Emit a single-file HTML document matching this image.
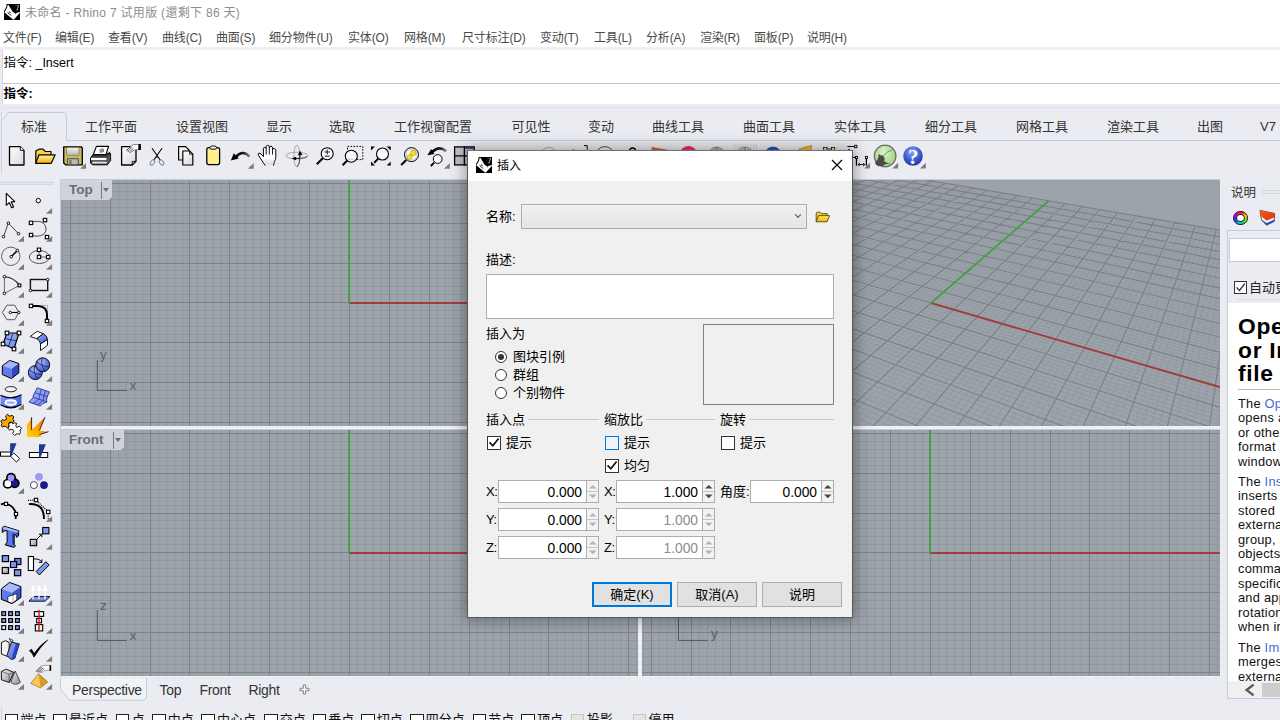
<!DOCTYPE html>
<html lang="zh-CN"><head><meta charset="utf-8"><title>未命名 - Rhino 7 试用版</title>
<style>
*{box-sizing:border-box;margin:0;padding:0}
html,body{width:1280px;height:720px;overflow:hidden}
body{position:relative;background:#ebecf1;font-family:"Liberation Sans","Noto Sans CJK SC",sans-serif;font-size:12px;color:#000;-webkit-font-smoothing:antialiased}
.abs,.abs *{position:absolute}
div,span,svg{position:absolute}
.t{white-space:nowrap;line-height:1}
/* title + menu */
#titlebar{left:0;top:0;width:1280px;height:27px;background:#fff}
#titletxt{left:25px;top:6.5px;font-size:12px;color:#8c8c8c;letter-spacing:0.3px}
#menubar{left:0;top:27px;width:1280px;height:20px;background:#fff}
#menubar .t{top:5px;font-size:12px;color:#4a4a4a;letter-spacing:-0.15px}
/* command area */
#cmd{left:2px;top:50px;width:1278px;height:54px;background:#fff;border-left:1px solid #d4d6dc}
#cmdsep{left:0;top:33px;width:1278px;height:1px;background:#bcc5d9}
#cmd .t{left:0.5px;font-size:12.5px}
/* toolbar tabs */
#tbtop{left:3px;top:107px;width:1277px;height:1px;background:#dfe2ea}
#tabline{left:66px;top:140px;width:1214px;height:1px;background:#c9d0e0}
#tab0{left:3px;top:112px;width:64px;height:29px;border:1px solid #c9d0e0;border-bottom:none;border-radius:5px 5px 0 0;background:#f0f1f5}
.tab{top:119.5px;font-size:13px;color:#333;transform:translateX(-50%)}
/* viewports */
.vp{background:#9da3ab;overflow:hidden}
.vplabel{left:0;top:0;height:20px;background:#d0d3d9;clip-path:polygon(0 0,100% 0,100% 17px,calc(100% - 3px) 100%,0 100%)}
.vplabel .t{left:8px;top:3px;font-size:13.5px;font-weight:bold;color:#6a6d73}
.vplabel i{position:absolute;top:2px;width:1px;height:17px;background:#77797e}
.vplabel b{position:absolute;top:8px;width:0;height:0;border:3.5px solid transparent;border-top:4px solid #6a6d73;border-bottom:none}
.axl{font-size:13.5px;color:#5e6065}
/* dialog */
#dlg{left:467px;top:150px;width:386px;height:468px;background:#f0f0f0;border:1px solid #55575b;border-top-color:#6f7277;box-shadow:0 0 14px 2px rgba(0,0,0,.35)}
#dlgtitle{left:0;top:0;width:384px;height:30px;background:#fff}
.lbl{font-size:13px;color:#000}
.num{background:#fff;border:1px solid #adadad;height:23px;font-size:13.8px;text-align:right;padding:5px 4px 0 0;line-height:14px}
.spin{width:11px;height:22px}
.cb{width:14px;height:13.5px;border:1px solid #333;background:#fff}
.btn{height:25px;border:1px solid #adadad;background:#e1e1e1;font-size:13px;text-align:center;line-height:23px}
.grpline{height:1px;background:#c9c9c9}
.xl{font-size:13px;letter-spacing:-0.5px}
.hp{font-size:12.8px;line-height:14.6px;white-space:pre;color:#111;letter-spacing:0.25px}
.hp i{font-style:normal;color:#3c6cd6}
.vt{top:683px;font-size:14px;letter-spacing:-0.3px;color:#333}
</style></head><body>
<div id="titlebar">
<svg style="left:4px;top:4px" width="16" height="16" viewBox="0 0 16 16"><rect width="16" height="16" fill="#000"/><path d="M0 0H2.7C2.5 2.6 1.6 4.9 0 6.9Z" fill="#fff"/><path d="M0.3 8.3L1.7 6.3C2.8 4.6 3.4 2.8 3.7 1L4.3 0.7C5.6 2.4 6.6 4.4 7.7 6.3C8.9 8.3 10.3 9.4 12 8.9L16 8.1V8.8L9.6 15.7L9 15.4Z" fill="#fff"/><path d="M3.7 8.6C4.8 9.3 6 10.4 7 11.6M4.9 7.5C5.6 7.9 6.2 8.5 6.8 9.2" stroke="#000" stroke-width="0.95" fill="none"/><path d="M10.9 9.9C11.6 9.8 12.1 9.4 12.4 8.9" stroke="#000" stroke-width="0.8" fill="none"/><path d="M14.6 1.5L12.7 6.8" stroke="#fff" stroke-width="1" stroke-dasharray="1.3 0.5"/><path d="M11.6 1.3H14.8" stroke="#fff" stroke-width="0.6" stroke-dasharray="0.8 0.5"/></svg>
<span class="t" id="titletxt">未命名 - Rhino 7 试用版 (還剩下 86 天)</span>
</div>
<div id="menubar">
<span class="t" style="left:3px">文件(F)</span><span class="t" style="left:55px">编辑(E)</span><span class="t" style="left:108px">查看(V)</span><span class="t" style="left:162px">曲线(C)</span><span class="t" style="left:216px">曲面(S)</span><span class="t" style="left:269px">细分物件(U)</span><span class="t" style="left:348px">实体(O)</span><span class="t" style="left:404px">网格(M)</span><span class="t" style="left:462px">尺寸标注(D)</span><span class="t" style="left:540px">变动(T)</span><span class="t" style="left:594px">工具(L)</span><span class="t" style="left:646px">分析(A)</span><span class="t" style="left:700px">渲染(R)</span><span class="t" style="left:754px">面板(P)</span><span class="t" style="left:807px">说明(H)</span>
</div>
<div style="left:0;top:47px;width:1280px;height:3px;background:#f0f0f0"></div>
<div id="cmd"><span class="t" style="top:7px">指令: _Insert</span><div id="cmdsep"></div><span class="t" style="top:37.5px;font-weight:bold">指令:</span></div>
<div id="tbtop"></div>
<svg style="left:0;top:108px" width="1280" height="70" viewBox="0 108 1280 70"><path d="M3 119.6L8.3 112.5H63Q66.5 112.5 66.5 116V140.5H1280" fill="none" stroke="#c3cbdd" stroke-width="1"/><path d="M1.5 112V173.6" stroke="#c9d0e0" stroke-width="1"/></svg>
<span class="t tab" style="left:34px">标准</span><span class="t tab" style="left:111px">工作平面</span><span class="t tab" style="left:202px">设置视图</span><span class="t tab" style="left:279px">显示</span><span class="t tab" style="left:342px">选取</span><span class="t tab" style="left:433px">工作视窗配置</span><span class="t tab" style="left:531px">可见性</span><span class="t tab" style="left:601px">变动</span><span class="t tab" style="left:678px">曲线工具</span><span class="t tab" style="left:769px">曲面工具</span><span class="t tab" style="left:860px">实体工具</span><span class="t tab" style="left:951px">细分工具</span><span class="t tab" style="left:1042px">网格工具</span><span class="t tab" style="left:1133px">渲染工具</span><span class="t tab" style="left:1210px">出图</span><span class="t tab" style="left:1268px">V7</span>

<svg style="left:0;top:140px" width="1280" height="40" viewBox="0 140 1280 40"><defs><linearGradient id="tp" x1="0" y1="0" x2="1" y2="1"><stop offset="0" stop-color="#ffffff"/><stop offset="1" stop-color="#d9d9d9"/></linearGradient><linearGradient id="tf" x1="0" y1="0" x2="0" y2="1"><stop offset="0" stop-color="#fdf1a6"/><stop offset="1" stop-color="#f5b400"/></linearGradient><linearGradient id="tg" x1="0" y1="0" x2="0" y2="1"><stop offset="0" stop-color="#f2f2f2"/><stop offset="1" stop-color="#b8b8b8"/></linearGradient><radialGradient id="th" cx="0.45" cy="0.3" r="0.75"><stop offset="0" stop-color="#8aa0f0"/><stop offset="0.55" stop-color="#3f5bd0"/><stop offset="1" stop-color="#1f2f9a"/></radialGradient><radialGradient id="tgh" cx="0.45" cy="0.35" r="0.7"><stop offset="0" stop-color="#d6efc0"/><stop offset="1" stop-color="#9fd27e"/></radialGradient><linearGradient id="tu" x1="0" y1="0" x2="1" y2="0"><stop offset="0" stop-color="#000"/><stop offset="0.6" stop-color="#222"/><stop offset="1" stop-color="#8a8a8a"/></linearGradient><radialGradient id="tsph" cx="0.5" cy="0.9" r="0.9"><stop offset="0" stop-color="#ffe000"/><stop offset="0.5" stop-color="#ff7a00"/><stop offset="1" stop-color="#e0107a"/></radialGradient></defs><path d="M9.5 146.6H20.3L24 150.4V165H9.5Z" fill="url(#tp)" stroke="#000" stroke-width="1.3" stroke-linejoin="round"/><path d="M20.3 146.6V150.4H24" fill="#fff" stroke="#000" stroke-width="0.9"/><path d="M35.8 163V151L39 149.2H43L45.3 151.5H51V155" fill="#f6d24a" stroke="#000" stroke-width="1.2" stroke-linejoin="round"/><path d="M39 154.8H55.2L51.2 163.3H35.6Z" fill="url(#tf)" stroke="#000" stroke-width="1.2" stroke-linejoin="round"/><path d="M63.7 146.8H81.2L82.3 148V164.8H65.6L63.7 163Z" fill="#cbb968" stroke="#000" stroke-width="1.3" stroke-linejoin="round"/><rect x="66.8" y="147.6" width="12.2" height="7.6" fill="url(#tg)" stroke="#7d7134" stroke-width="0.6"/><rect x="67.6" y="158.8" width="10.6" height="6" fill="#b9b9b9" stroke="#333" stroke-width="0.8"/><rect x="69.2" y="160.2" width="2.4" height="4" fill="#857a2e"/><path d="M80.2 168.8H86.0V163.0Z" fill="#7c7c7c"/><path d="M93.2 154.8L96.4 146.4H108.6L105.8 154.8Z" fill="#fff" stroke="#000" stroke-width="1.1" stroke-linejoin="round"/><path d="M99.5 149L102.5 148.2V152.6L99.5 153Z" fill="#9a9a9a"/><path d="M102.5 148.2L103.6 149V152L102.5 152.6Z" fill="#444"/><path d="M90.6 158L93 154.6H106L109.6 152.4L110.6 154V160.5L107.4 164.8H92.4L90.6 163Z" fill="#3a3a3a" stroke="#000" stroke-width="1" stroke-linejoin="round"/><path d="M91 157.8H106.6V160.2H91Z" fill="#fff"/><path d="M92.2 161.6H106.8V163.6H92.2Z" fill="#e0e0e0"/><path d="M106.6 157.8L110.4 154.2V160.4L107.2 164.6Z" fill="#555"/><path d="M121.6 146.6H136V161.4L132.2 165H121.6Z" fill="url(#tp)" stroke="#000" stroke-width="1.3" stroke-linejoin="round"/><path d="M136 161.4H132.2V165" fill="none" stroke="#000" stroke-width="0.9"/><path d="M126.4 150.2L133.2 144.6L138.6 144.4V149.6L134.4 150L130.2 152.6Z" fill="#fff" stroke="#555" stroke-width="0.7"/><path d="M126.8 150L131 146.4M128.2 150.8L132.2 147.2M129.6 151.8L133.6 148.2" stroke="#444" stroke-width="0.8"/><rect x="138.6" y="144" width="2.3" height="6" fill="#000"/><path d="M152 148.2L160.2 160M162 148.2L153.8 160" stroke="#000" stroke-width="1.1" fill="none"/><ellipse cx="152.4" cy="162.6" rx="1.9" ry="3" transform="rotate(35 152.4 162.6)" fill="none" stroke="#666e8e" stroke-width="0.9"/><ellipse cx="161.6" cy="162.6" rx="1.9" ry="3" transform="rotate(-35 161.6 162.6)" fill="none" stroke="#666e8e" stroke-width="0.9"/><circle cx="157" cy="157" r="0.9" fill="#223"/><path d="M178.6 146.6H185.6L189 150V160H178.6Z" fill="url(#tp)" stroke="#000" stroke-width="1.2" stroke-linejoin="round"/><path d="M182.8 151H189.6L192.8 154.2V165H182.8Z" fill="url(#tp)" stroke="#000" stroke-width="1.2" stroke-linejoin="round"/><path d="M189.6 151V154.2H192.8" fill="none" stroke="#000" stroke-width="0.8"/><rect x="206.8" y="147.6" width="12.8" height="17" rx="2" fill="#fdf08c" stroke="#000" stroke-width="1.3"/><path d="M209.8 147.8Q210 146 211.6 146H214.8Q216.4 146 216.6 147.8L215.6 149.2H210.8Z" fill="#e6e6e6" stroke="#000" stroke-width="0.9"/><path d="M230.8 160.6L233.8 153.2L238.8 158.6Z" fill="#000"/><path d="M235.8 157.2Q242.5 149.3 249.6 156.6" fill="none" stroke="url(#tu)" stroke-width="2.5"/><path d="M247.9 168.8H253.7V163.0Z" fill="#7c7c7c"/><path d="M265.2 165.6L258.4 155.2Q257.6 153.6 258.8 153.2Q260 152.9 261 154L263.4 156.6V148.6Q263.5 147.3 264.8 147.3Q266.1 147.3 266.2 148.6V146.6Q266.4 145.3 267.7 145.3Q269.1 145.3 269.3 146.6V147.4Q269.5 146.2 270.9 146.2Q272.3 146.3 272.5 147.6V149.6Q272.8 148.5 274.2 148.6Q275.6 148.8 275.8 150.2V157.4Q275.6 159.6 274.4 161.6L273.5 165.6" fill="#fff" stroke="#000" stroke-width="1" stroke-linejoin="round"/><path d="M266.2 148.6V154.6M269.3 147V154.6M272.5 149V154.6" stroke="#000" stroke-width="0.9"/><path d="M264 158.5L274.8 158.5L273 165.2H265.6L262.8 161Z" fill="url(#tg)" opacity="0.55"/><ellipse cx="296.9" cy="155.6" rx="10.9" ry="3.4" fill="none" stroke="#8a8a8a" stroke-width="0.7"/><ellipse cx="296.9" cy="156" rx="3" ry="10.7" fill="none" stroke="#8a8a8a" stroke-width="0.7"/><path d="M299.8 154.5V158.4H295.6" stroke="#000" stroke-width="0.9" fill="none"/><path d="M297.9 155.3L299.9 150.5L302.4 154.9Z" fill="#000"/><path d="M291.5 158.4L296.1 156.7V160.3Z" fill="#000"/><path d="M299.8 158.4Q304.5 158 307.2 156.6M297 166.6Q299.6 164 299.8 158.4" stroke="#333" stroke-width="0.8" fill="none"/><circle cx="327.2" cy="153.7" r="6" fill="#fafafa" stroke="#000" stroke-width="1.1"/><path d="M322.8 158.2L316.8 164.2" stroke="#000" stroke-width="2"/><path d="M324.6 152H329.8M327.2 149.6V154.4M324.8 156.2H329.6" stroke="#000" stroke-width="0.9"/><rect x="347.5" y="146.4" width="15.3" height="13.2" fill="none" stroke="#000" stroke-width="1" stroke-dasharray="1.6 1.4"/><circle cx="351.3" cy="156.2" r="6" fill="#f6f6f6" stroke="#000" stroke-width="1.1"/><path d="M348.6 159.4H354.2" stroke="#888" stroke-width="0.8" stroke-dasharray="1.4 1.2"/><path d="M347 160.8L342.6 165.2" stroke="#000" stroke-width="2"/><circle cx="382.5" cy="154" r="6" fill="#fafafa" stroke="#000" stroke-width="1.1"/><path d="M378.2 158.6L374.2 162.8" stroke="#000" stroke-width="2"/><path d="M371 146.4H375L371 150.4ZM390.7 146.4V150.4L386.7 146.4ZM371 165.5V161.5L375 165.5ZM390.7 165.5H386.7L390.7 161.5Z" fill="#000"/><circle cx="411.5" cy="154.6" r="7" fill="#fafafa" stroke="#000" stroke-width="1"/><circle cx="411.5" cy="154.6" r="5.6" fill="none" stroke="#999" stroke-width="0.6"/><circle cx="413.2" cy="152.9" r="2.8" fill="#f4e020" stroke="#8a7a00" stroke-width="0.4"/><circle cx="409.6" cy="157" r="2.5" fill="#f4e020" stroke="#8a7a00" stroke-width="0.4"/><path d="M406.2 160L401.2 165" stroke="#000" stroke-width="2"/><path d="M427.4 155.2L431.2 149L434.4 154Z" fill="#000"/><path d="M432.4 151.8Q439 145.3 446.2 151.2" fill="none" stroke="url(#tu)" stroke-width="2.8"/><circle cx="437.7" cy="159" r="4.4" fill="#fafafa" stroke="#000" stroke-width="1"/><path d="M434.2 162.6L430.8 166" stroke="#000" stroke-width="1.8"/><path d="M444.0 168.8H449.8V163.0Z" fill="#7c7c7c"/><rect x="454.6" y="146.9" width="19.6" height="18" fill="#c2c2c2" stroke="#000" stroke-width="1.3"/><path d="M464.4 146.4V165.4M454 155.9H474.6" stroke="#000" stroke-width="1.4"/><rect x="465.2" y="147.5" width="8.4" height="1.3" fill="#1a2a9a"/><circle cx="549" cy="156" r="8.6" fill="none" stroke="#999" stroke-width="0.8"/><circle cx="573.5" cy="150.3" r="1.4" fill="#e08000"/><path d="M584 145.6H587.2V149.6" fill="none" stroke="#000" stroke-width="1"/><circle cx="604.8" cy="155.6" r="9" fill="none" stroke="#333" stroke-width="0.9"/><path d="M629.6 151Q629.6 148 632.6 148Q635.6 148 635.6 151" fill="none" stroke="#000" stroke-width="1.4"/><path d="M652 147.4L670 150.6V152H652Z" fill="#f0601a" stroke="#7a2a00" stroke-width="0.4"/><circle cx="688.5" cy="154.6" r="8.6" fill="url(#tsph)"/><circle cx="716.7" cy="155.4" r="8.4" fill="#b8b8b8" stroke="#666" stroke-width="0.6"/><path d="M716.7 147V152" stroke="#555" stroke-width="0.6"/><path d="M734 145H757M734 147H757M734 149H757" stroke="#c4c6cc" stroke-width="1.2" stroke-dasharray="1.5 1.2"/><circle cx="745" cy="155.4" r="8.4" fill="#bdbdbd" stroke="#777" stroke-width="0.6"/><path d="M745 147V152" stroke="#555" stroke-width="0.6"/><circle cx="773" cy="155.4" r="8.4" fill="#1f4fd0" stroke="#0a1a6a" stroke-width="0.5"/><path d="M799 149L811.6 145.4L811 151H800Z" fill="#f5b820" stroke="#8a5a00" stroke-width="0.5"/><rect x="823.6" y="147.6" width="3.4" height="3" fill="#f4d860" stroke="#000" stroke-width="0.7"/><rect x="831.4" y="147.6" width="3.4" height="3" fill="#f4d860" stroke="#000" stroke-width="0.7"/><path d="M827 149H831.4" stroke="#000" stroke-width="0.8"/><path d="M847.4 146.5H854.4M852.8 157.4H855.5" stroke="#000" stroke-width="1"/><rect x="854.6" y="145.3" width="2.3" height="2.4" fill="#fff" stroke="#000" stroke-width="0.9"/><path d="M847.6 150.2L849 148.8L850.4 150.2L849 151.2Z" fill="#000"/><rect x="855.5" y="156.4" width="2" height="2" fill="#fff" stroke="#000" stroke-width="0.9"/><rect x="865.4" y="156.4" width="2" height="2" fill="#fff" stroke="#000" stroke-width="0.9"/><path d="M856.5 158.6V165.8M866.4 158.6V165.8" stroke="#000" stroke-width="1.3"/><path d="M858.4 164.6H864.6M859.8 163.2L858.2 164.6L859.8 166M863.2 163.2L864.8 164.6L863.2 166" fill="none" stroke="#000" stroke-width="0.9"/><path d="M864.2 168.5H870.0V162.7Z" fill="#7c7c7c"/><circle cx="885.1" cy="156" r="10.8" fill="url(#tgh)" stroke="#6e6e6e" stroke-width="1.3"/><path d="M875.1 162.7L877.4 159.5L878.6 156.8L878.2 154.8L879.8 154.5L880.5 155.6L882.1 155.2L883.7 156.4L884.8 158.8L884 161.1L886.8 162.7L890.7 163.4L886 163.9L882.9 165.8L878.2 166.3L875.5 164.2Z" fill="#4a4a4a"/><path d="M883.4 155.6Q887.5 151 892.4 149.8" stroke="#5f6a58" stroke-width="0.7" fill="none"/><path d="M883 146.5V153.5" stroke="#e4f4d8" stroke-width="1"/><path d="M892.3 168.5H898.1V162.7Z" fill="#7c7c7c"/><circle cx="913" cy="156" r="9.8" fill="url(#th)"/><text x="913.2" y="163.6" text-anchor="middle" style="font-family:'Liberation Serif',serif;font-weight:bold;font-size:21px" fill="#fff">?</text><path d="M920.0 168.5H925.8V162.7Z" fill="#7c7c7c"/></svg>
<svg style="left:0;top:180px" width="62" height="520" viewBox="0 180 62 520"><defs><linearGradient id="gb" x1="0" y1="0" x2="1" y2="1"><stop offset="0" stop-color="#9db0fa"/><stop offset="1" stop-color="#3d58d6"/></linearGradient><radialGradient id="gs" cx="0.4" cy="0.3" r="0.8"><stop offset="0" stop-color="#a9b9fb"/><stop offset="0.6" stop-color="#5672e6"/><stop offset="1" stop-color="#2740b0"/></radialGradient><linearGradient id="gg" x1="0" y1="0" x2="1" y2="1"><stop offset="0" stop-color="#f2f2f2"/><stop offset="1" stop-color="#8c8c8c"/></linearGradient><linearGradient id="go" x1="0" y1="1" x2="1" y2="0"><stop offset="0" stop-color="#ffd400"/><stop offset="0.55" stop-color="#ff9a00"/><stop offset="1" stop-color="#e84a00"/></linearGradient><linearGradient id="gl" x1="0" y1="0" x2="1" y2="1"><stop offset="0" stop-color="#a4b4fa"/><stop offset="1" stop-color="#6f88f0"/></linearGradient><linearGradient id="gb2" x1="0" y1="0" x2="1" y2="0.3"><stop offset="0" stop-color="#7d95f4"/><stop offset="1" stop-color="#4862dc"/></linearGradient></defs><path d="M0 182.2H54M0 184.3H54" stroke="#c9d0e0" stroke-width="0.9"/><path d="M6.3 193.3V205.3L9.2 202.6L11.7 207.8L13.6 206.9L11.2 201.9L14.8 201.6Z" fill="#fff" stroke="#000" stroke-width="1.1" stroke-linejoin="round"/><circle cx="38.3" cy="200.6" r="2.2" fill="#fff" stroke="#000" stroke-width="1.0"/><path d="M45.9 213.8H52.1V207.9Z" fill="#7c7c7c"/><path d="M3.5 236.6L8.4 223.1L18.5 233.7" fill="none" stroke="#333" stroke-width="0.9"/><circle cx="3.5" cy="236.6" r="1.3" fill="#fff" stroke="#000" stroke-width="0.9"/><circle cx="8.4" cy="223.1" r="1.3" fill="#fff" stroke="#000" stroke-width="0.9"/><circle cx="18.5" cy="233.7" r="1.3" fill="#fff" stroke="#000" stroke-width="0.9"/><path d="M17.8 241.8H24.0V235.9Z" fill="#7c7c7c"/><path d="M31 222.9C37 219.5 46 221.5 46 229C46 236 37 237.5 31 235" fill="none" stroke="#333" stroke-width="0.9"/><rect x="29.3" y="221.2" width="3.4" height="3.4" fill="#fff" stroke="#000" stroke-width="1.1"/><rect x="43.3" y="218.4" width="3.4" height="3.4" fill="#fff" stroke="#000" stroke-width="1.1"/><rect x="29.3" y="233.3" width="3.4" height="3.4" fill="#fff" stroke="#000" stroke-width="1.1"/><rect x="45.3" y="235.4" width="3.4" height="3.4" fill="#fff" stroke="#000" stroke-width="1.1"/><path d="M45.9 241.8H52.1V235.9Z" fill="#7c7c7c"/><circle cx="10.8" cy="256.3" r="9.2" fill="none" stroke="#555" stroke-width="0.9"/><path d="M11.2 256.7L17.4 250.5" stroke="#000" stroke-width="1.5"/><circle cx="11.2" cy="256.7" r="1.3" fill="#fff" stroke="#000" stroke-width="0.9"/><circle cx="17.4" cy="250.5" r="1.3" fill="#fff" stroke="#000" stroke-width="0.9"/><path d="M17.8 269.8H24.0V263.9Z" fill="#7c7c7c"/><ellipse cx="39.4" cy="257" rx="10.1" ry="6.5" fill="none" stroke="#444" stroke-width="0.9"/><path d="M39 249.8V257H48.2" fill="none" stroke="#444" stroke-width="0.8"/><rect x="37.3" y="248.1" width="3.4" height="3.4" fill="#fff" stroke="#000" stroke-width="1.1"/><rect x="37.3" y="255.3" width="3.4" height="3.4" fill="#fff" stroke="#000" stroke-width="1.1"/><rect x="46.5" y="255.3" width="3.4" height="3.4" fill="#fff" stroke="#000" stroke-width="1.1"/><path d="M45.9 269.8H52.1V263.9Z" fill="#7c7c7c"/><path d="M4.4 276.7Q14.5 277.5 19.4 285.4" fill="none" stroke="#222" stroke-width="1.1"/><path d="M4.4 276.7V293.4L19.4 285.4" fill="none" stroke="#333" stroke-width="0.7"/><circle cx="4.4" cy="276.7" r="1.3" fill="#fff" stroke="#000" stroke-width="0.9"/><circle cx="4.4" cy="293.4" r="1.3" fill="#fff" stroke="#000" stroke-width="0.9"/><rect x="18.0" y="284.0" width="2.8" height="2.8" fill="#fff" stroke="#000" stroke-width="1.1"/><path d="M17.8 297.8H24.0V291.9Z" fill="#7c7c7c"/><rect x="30.4" y="279.5" width="17.3" height="11" fill="none" stroke="#111" stroke-width="1.4"/><circle cx="47.7" cy="279.6" r="1.3" fill="#fff" stroke="#000" stroke-width="0.9"/><circle cx="30.5" cy="290.5" r="1.3" fill="#fff" stroke="#000" stroke-width="0.9"/><path d="M45.9 297.8H52.1V291.9Z" fill="#7c7c7c"/><path d="M2.3 312.5L6.9 305.2H14.7L18.8 312.5L14.7 319.7H6.9Z" fill="none" stroke="#333" stroke-width="0.8"/><path d="M10.3 312.5H18.8" stroke="#000" stroke-width="1.1"/><circle cx="10.3" cy="312.5" r="1.2" fill="#fff" stroke="#000" stroke-width="0.9"/><circle cx="18.8" cy="312.5" r="1.2" fill="#fff" stroke="#000" stroke-width="0.9"/><path d="M17.8 325.8H24.0V319.9Z" fill="#7c7c7c"/><path d="M40 305.4H47.4V313" fill="none" stroke="#999" stroke-width="0.7"/><path d="M31 305.9H38.5Q47 306.5 47 315V321" fill="none" stroke="#000" stroke-width="2"/><rect x="29.3" y="304.2" width="3.4" height="3.4" fill="#fff" stroke="#000" stroke-width="1.1"/><rect x="45.3" y="319.3" width="3.4" height="3.4" fill="#fff" stroke="#000" stroke-width="1.1"/><path d="M45.9 325.8H52.1V319.9Z" fill="#7c7c7c"/><path d="M7 333H19L14 349L3 344Z" fill="url(#gl)" stroke="#000" stroke-width="1.2"/><path d="M13 333L8.5 346.5M5 338.5L16.5 341" stroke="#1a2560" stroke-width="0.9" fill="none"/><rect x="5.2" y="331.2" width="3.6" height="3.6" fill="#fff" stroke="#000" stroke-width="1.1"/><rect x="17.2" y="331.2" width="3.6" height="3.6" fill="#fff" stroke="#000" stroke-width="1.1"/><rect x="12.2" y="347.2" width="3.6" height="3.6" fill="#fff" stroke="#000" stroke-width="1.1"/><rect x="1.2" y="342.2" width="3.6" height="3.6" fill="#fff" stroke="#000" stroke-width="1.1"/><path d="M17.8 353.8H24.0V347.9Z" fill="#7c7c7c"/><path d="M30.2 336.5L37.2 331.3L43.3 333.7L36.8 338.7Z" fill="#fff" stroke="#000" stroke-width="0.9" stroke-linejoin="round"/><path d="M36.8 338.7L43.3 333.7Q47.2 335.6 47.5 339.6L40.5 343.9Q40.2 340.4 36.8 338.7Z" fill="url(#gb)" stroke="#000" stroke-width="0.9" stroke-linejoin="round"/><path d="M40.5 343.9L47.5 339.6V345.3L40.5 350.5Z" fill="#fff" stroke="#000" stroke-width="0.9" stroke-linejoin="round"/><path d="M45.9 353.8H52.1V347.9Z" fill="#7c7c7c"/><path d="M2.3 365.8L9.6 360.4L18.8 363.5L11.5 368.8Z" fill="#a3b4fb"/><path d="M2.3 365.8L11.5 368.8V378.6L2.3 374.5Z" fill="#5d79ec"/><path d="M11.5 368.8L18.8 363.5V372.9L11.5 378.6Z" fill="#2f48c2"/><path d="M2.3 365.8L9.6 360.4L18.8 363.5V372.9L11.5 378.6L2.3 374.5Z" fill="none" stroke="#000" stroke-width="1"/><path d="M17.8 381.8H24.0V375.9Z" fill="#7c7c7c"/><circle cx="35.3" cy="372.6" r="7" fill="url(#gs)" stroke="#000" stroke-width="0.9"/><path d="M29.1 369.6Q35.8 375.1 41.9 374.4M34.8 365.6Q32.8 372.6 37.7 379.1" fill="none" stroke="#111" stroke-width="0.7"/><circle cx="42.7" cy="364.8" r="7" fill="url(#gs)" stroke="#000" stroke-width="0.9"/><path d="M36.5 361.8Q43.2 367.3 49.3 366.6M42.2 357.8Q40.2 364.8 45.1 371.3" fill="none" stroke="#111" stroke-width="0.7"/><path d="M45.9 381.8H52.1V375.9Z" fill="#7c7c7c"/><ellipse cx="10.8" cy="389.2" rx="5.7" ry="2.6" fill="#f4f5f8" stroke="#111" stroke-width="0.9"/><path d="M0.5 395.2Q10.8 400.5 21.5 394.8V404.6Q10.8 411 0.5 404.8Z" fill="url(#gb2)"/><path d="M0.5 395.2Q10.8 400.5 21.5 394.8M0.5 404.8Q10.8 411 21.5 404.6" fill="none" stroke="#000" stroke-width="1.2"/><ellipse cx="10.8" cy="402.6" rx="5.4" ry="2.5" fill="#a6b5f9" stroke="#fff" stroke-width="1.6"/><path d="M17.8 409.8H24.0V403.9Z" fill="#7c7c7c"/><path d="M37.2 387.8L49.5 391.9Q45.5 399 47 402Q42 403 40.4 406.1L28.9 402Q34 398 33.8 394.5Q35.8 391 37.2 387.8Z" fill="url(#gl)" stroke="#16226e" stroke-width="0.8"/><path d="M41.3 389.2Q39.5 395.5 39 398.5Q37 402 32.8 403.4M45.4 390.6Q43.5 397 43 400Q41 403.5 36.6 404.8M35 392.8L47.3 396.6M33.5 397.4L45.6 401.5" fill="none" stroke="#1b2a80" stroke-width="0.7"/><path d="M45.9 409.8H52.1V403.9Z" fill="#7c7c7c"/><path d="M5.40 416.25L7.50 414.20L9.20 416.25L12.10 415.40L13.75 416.70L12.90 419.20L14.20 421.25L12.50 422.50L9.60 422.10L8.75 423.75L9.00 426.70L7.50 427.90L5.80 426.70L4.20 426.25L2.10 427.10L1.25 425.40L2.10 423.30L0.80 421.25L2.10 419.60L4.20 420.40L6.25 419.60L6.25 417.50Z" fill="#f8a900" stroke="#000" stroke-width="0.9" stroke-linejoin="round"/><path d="M9.60 422.90L11.70 422.50L12.50 423.75L14.60 422.90L16.70 423.30L15.80 425.80L16.70 427.50L19.20 426.25L21.70 428.30L20.00 430.00L20.40 432.50L19.60 434.20L17.10 433.75L14.60 435.40L12.50 433.30L13.75 431.70L12.90 429.60L10.40 429.20L9.60 430.40L8.30 428.30L9.20 426.25L8.75 424.20Z" fill="#fff" stroke="#000" stroke-width="0.9" stroke-linejoin="round"/><path d="M27 436.9V425.4L31.6 417.2V430L45 417.2L39.4 430.5L48.6 431.7L39.4 434.6L41.7 436.9Z" fill="url(#go)"/><path d="M31.6 417.2V430M45 417.2L39.4 430.5M48.6 431.7L39.4 434.6" stroke="#000" stroke-width="0.8" fill="none"/><path d="M13.8 453L19.7 458.5L16.5 462.1L10.5 456.2Z" fill="#fff" stroke="#000" stroke-width="0.9"/><rect x="0.5" y="452" width="10" height="4.2" fill="#fff" stroke="#000" stroke-width="1"/><path d="M10.1 443.3H16.5L11.5 455.7H10.1Z" fill="#1f3893"/><rect x="29.4" y="452.5" width="18.3" height="5" fill="#fff" stroke="#000" stroke-width="1"/><path d="M39 444.2H45.9L40.4 457.5H39Z" fill="#1f3893"/><path d="M11 477.8m0 0" /><circle cx="11.0" cy="477.8" r="5" fill="#000"/><circle cx="7.8" cy="483.7" r="5" fill="#000"/><circle cx="14.7" cy="483.3" r="5" fill="#000"/><circle cx="7.8" cy="483.7" r="3.4" fill="#fff"/><circle cx="14.7" cy="483.3" r="3.4" fill="#1a1a8c"/><circle cx="11.0" cy="477.8" r="3.4" fill="#9b9bf6"/><path d="M17.8 493.8H24.0V487.9Z" fill="#7c7c7c"/><circle cx="39" cy="476.8" r="3.9" fill="#9b9bf6"/><circle cx="33.9" cy="485.1" r="3.5" fill="#fff" stroke="#222" stroke-width="0.8"/><circle cx="44" cy="485.1" r="3.9" fill="#1a1a8c"/><path d="M0.9 504.3Q3.5 503.4 6 503.9Q14 505.5 16 514L15.6 519" fill="none" stroke="#000" stroke-width="1.8"/><rect x="4.4" y="502.3" width="3.2" height="3.2" fill="#fff" stroke="#000" stroke-width="1.1"/><rect x="14.4" y="512.4" width="3.2" height="3.2" fill="#fff" stroke="#000" stroke-width="1.1"/><path d="M28 500.4L36 500L48.2 511.9V520" fill="none" stroke="#000" stroke-width="1.2" stroke-dasharray="1.1 1.1"/><path d="M28.9 504.1Q44 503 44 519" fill="none" stroke="#000" stroke-width="1.9"/><rect x="34.3" y="498.3" width="3.4" height="3.4" fill="#fff" stroke="#000" stroke-width="1.1"/><rect x="46.5" y="510.2" width="3.4" height="3.4" fill="#fff" stroke="#000" stroke-width="1.1"/><path d="M45.9 521.8H52.1V515.9Z" fill="#7c7c7c"/><path d="M2.3 527.8L4.2 526.2L18.75 530.75L18.5 535.75L16.5 537.4Q16.3 534.4 14.2 533.8L14.2 544.7L15.6 545.75L13.75 547.4L5.2 544.9L5.4 544L7.1 542.8V530.5Q4.6 530.4 2.3 532.4Z" fill="#5b79ee" stroke="#000" stroke-width="1" stroke-linejoin="round"/><path d="M2.9 528L4.4 526.8L18.2 531.1L18.1 532.6L3 528.9Z" fill="#aebcfb"/><path d="M12.4 533.4L13.9 533.9V544.9L12.6 544.6Z" fill="#15246e"/><path d="M16.4 532.6L18.1 533.1L18 535.6L16.7 536.7Z" fill="#2338a8"/><rect x="30.3" y="539.4" width="6.4" height="6.3" fill="url(#gg)" stroke="#000" stroke-width="1.1"/><rect x="42.7" y="527.5" width="6.2" height="6.3" fill="#7d96f3" stroke="#000" stroke-width="1.1"/><path d="M36.5 539.5L41.5 534.6M39 534.2H41.9V537.2" fill="none" stroke="#000" stroke-width="1"/><path d="M45.9 549.8H52.1V543.9Z" fill="#7c7c7c"/><rect x="2.3" y="555.6" width="6.2" height="6" fill="#7d96f3" stroke="#000" stroke-width="1.2"/><rect x="14.7" y="558.5" width="6.2" height="6" fill="#6d88f0" stroke="#000" stroke-width="1.2"/><rect x="10.5" y="561.5" width="6.2" height="6" fill="#7d96f3" stroke="#000" stroke-width="1.2"/><rect x="2.3" y="567.5" width="6.2" height="6" fill="url(#gg)" stroke="#000" stroke-width="1.2"/><rect x="14.5" y="569.7" width="6.2" height="6" fill="#7d96f3" stroke="#000" stroke-width="1.2"/><rect x="28.3" y="556.5" width="5.2" height="14" fill="#fff" stroke="#000" stroke-width="1.1"/><path d="M33.5 559Q40 558.5 41.6 562M38.8 562.2L41.8 562.6L42 559.4" fill="none" stroke="#000" stroke-width="1"/><path d="M36.2 571.4L45.9 561.7L49.1 565L39.4 574.9Z" fill="#7d96f3" stroke="#000" stroke-width="1"/><path d="M1.4 588.8L9.6 582.4L20.9 586.6L12 592.8Z" fill="#a9b9fb"/><path d="M1.4 588.8L12 592.8V603.5L1.4 599.4Z" fill="#5d79ec"/><path d="M12 592.8L20.9 586.6V597.6L12 603.5Z" fill="#3a55d0"/><path d="M7.8 596.5L13 595L16.8 593.5V600.2L12 603.5L7.8 601.8Z" fill="#fff" stroke="#000" stroke-width="0.7"/><path d="M13 595V602.8" stroke="#888" stroke-width="0.7"/><path d="M1.4 588.8L9.6 582.4L20.9 586.6V597.6L12 603.5L1.4 599.4Z" fill="none" stroke="#000" stroke-width="1"/><path d="M17.8 605.8H24.0V599.9Z" fill="#7c7c7c"/><path d="M28.9 601.2L33.5 596.6H50L45 601.2Z" fill="#7d96f3" stroke="#000" stroke-width="0.9"/><path d="M33.0 599V589M31.4 590.2L33.0 586.4L34.6 590.2Z" stroke="#fff" stroke-width="1.3" fill="#fff"/><path d="M39.0 599V589M37.4 590.2L39.0 586.4L40.6 590.2Z" stroke="#fff" stroke-width="1.3" fill="#fff"/><path d="M45.0 599V589M43.4 590.2L45.0 586.4L46.6 590.2Z" stroke="#fff" stroke-width="1.3" fill="#fff"/><path d="M45.9 605.8H52.1V599.9Z" fill="#7c7c7c"/><rect x="1.8" y="611.7" width="3.8" height="3.8" fill="#7d96f3" stroke="#000" stroke-width="1.2"/><rect x="1.8" y="618.6" width="3.8" height="3.8" fill="#7d96f3" stroke="#000" stroke-width="1.2"/><rect x="1.8" y="625.7" width="3.8" height="3.8" fill="#fff" stroke="#000" stroke-width="1.2"/><rect x="8.7" y="611.7" width="3.8" height="3.8" fill="#7d96f3" stroke="#000" stroke-width="1.2"/><rect x="8.7" y="618.6" width="3.8" height="3.8" fill="#7d96f3" stroke="#000" stroke-width="1.2"/><rect x="8.7" y="625.7" width="3.8" height="3.8" fill="#7d96f3" stroke="#000" stroke-width="1.2"/><rect x="15.5" y="611.7" width="3.8" height="3.8" fill="#7d96f3" stroke="#000" stroke-width="1.2"/><rect x="15.5" y="618.6" width="3.8" height="3.8" fill="#7d96f3" stroke="#000" stroke-width="1.2"/><rect x="15.5" y="625.7" width="3.8" height="3.8" fill="#7d96f3" stroke="#000" stroke-width="1.2"/><path d="M17.8 633.8H24.0V627.9Z" fill="#7c7c7c"/><rect x="34.4" y="611.6" width="9.2" height="4.8" fill="#f4f4f4" stroke="#000" stroke-width="1.1"/><rect x="36.7" y="618.4" width="4.8" height="4.4" fill="#f4f4f4" stroke="#000" stroke-width="1.1"/><rect x="35.3" y="624.6" width="7.4" height="6.3" fill="#f4f4f4" stroke="#000" stroke-width="1.1"/><path d="M39 610V631.8" stroke="#d01818" stroke-width="1.4"/><path d="M45.9 633.8H52.1V627.9Z" fill="#7c7c7c"/><path d="M9.2 638.5L13.3 640.6L11 642Z" fill="#fff" stroke="#000" stroke-width="0.7"/><path d="M1.4 642.5L5.5 640.7L9.2 642.5V657L5 655.5L1.4 654Z" fill="#f3f3f3" stroke="#000" stroke-width="0.9"/><path d="M6.9 655.4L11.5 642.1L19.3 643.9L14.7 658.6L11 659.5Z" fill="url(#gb)" stroke="#000" stroke-width="0.9"/><path d="M16 643.2L19.3 643.9L14.7 658.6L11.6 659.3Z" fill="#2b44b8"/><path d="M17.8 661.8H24.0V655.9Z" fill="#7c7c7c"/><path d="M29.4 650.6L31.6 649.2Q33 651 34 653.6Q39.5 645.5 47.7 639.8Q39 648.5 34 657.2Q32.5 653.5 29.4 650.6Z" fill="#000" stroke="#000" stroke-width="0.6"/><path d="M45.9 661.8H52.1V655.9Z" fill="#7c7c7c"/><path d="M1.4 671.4L6.4 669.2L13.8 672.4L9.2 682.5L1.4 679.7Z" fill="url(#gg)" stroke="#000" stroke-width="0.9"/><path d="M1.4 671.4L9 674.4L13.8 672.4M9 674.4L9.2 682.5" fill="none" stroke="#333" stroke-width="0.6"/><path d="M15.1 671L10.8 682.3Q15.6 686.3 20.4 682.3Z" fill="url(#gg)" stroke="#111" stroke-width="0.7"/><path d="M17.8 689.8H24.0V683.9Z" fill="#7c7c7c"/><path d="M38.5 673.7L30.7 683.4L40.4 687.8Z" fill="#fcc85e"/><path d="M38.5 673.7L40.4 687.8L47.7 682Z" fill="#e39a1e"/><path d="M38.5 673.7L30.7 683.4L40.4 687.8L47.7 682Z" fill="none" stroke="#7a5200" stroke-width="0.6"/><path d="M36.2 671.4L41 666.2L43.5 665.4H49.8V670.2H45L42.5 672.4Z" fill="#fff" stroke="#666" stroke-width="0.6"/><path d="M36.4 671.2L40.8 666.6M37.6 671.8L42 667M38.9 672.2L43.2 667.6M40.3 672.4L44.2 668.4" stroke="#444" stroke-width="0.75"/><rect x="49.6" y="665.2" width="1.6" height="5.6" fill="#000"/><path d="M45.9 689.8H52.1V683.9Z" fill="#7c7c7c"/></svg>
<div style="left:60px;top:179px;width:1160px;height:498px;background:#eef0f6;border-left:1px solid #c3cbdd;border-top:1px solid #c3cbdd"></div>
<div class="vp" style="left:61px;top:180px;width:577px;height:246px"><svg width="577" height="246" viewBox="0 0 577 246" style="left:0;top:0"><path d="M1.50 0V246M17.50 0V246M25.50 0V246M33.50 0V246M41.50 0V246M57.50 0V246M65.50 0V246M73.50 0V246M81.50 0V246M97.50 0V246M105.50 0V246M113.50 0V246M121.50 0V246M136.50 0V246M144.50 0V246M152.50 0V246M160.50 0V246M176.50 0V246M184.50 0V246M192.50 0V246M200.50 0V246M216.50 0V246M224.50 0V246M232.50 0V246M240.50 0V246M256.50 0V246M264.50 0V246M272.50 0V246M280.50 0V246M296.50 0V246M304.50 0V246M312.50 0V246M320.50 0V246M336.50 0V246M344.50 0V246M352.50 0V246M360.50 0V246M376.50 0V246M384.50 0V246M392.50 0V246M400.50 0V246M416.50 0V246M424.50 0V246M432.50 0V246M440.50 0V246M455.50 0V246M463.50 0V246M471.50 0V246M479.50 0V246M495.50 0V246M503.50 0V246M511.50 0V246M519.50 0V246M535.50 0V246M543.50 0V246M551.50 0V246M559.50 0V246M575.50 0V246M0 11.50H577M0 19.50H577M0 27.50H577M0 35.50H577M0 51.50H577M0 59.50H577M0 67.50H577M0 75.50H577M0 90.50H577M0 98.50H577M0 106.50H577M0 114.50H577M0 130.50H577M0 138.50H577M0 146.50H577M0 154.50H577M0 170.50H577M0 178.50H577M0 186.50H577M0 194.50H577M0 210.50H577M0 218.50H577M0 226.50H577M0 234.50H577" stroke="#90969e" stroke-width="1" fill="none"/><path d="M9.50 0V246M49.50 0V246M89.50 0V246M128.50 0V246M168.50 0V246M208.50 0V246M248.50 0V246M288.50 122.90V246M328.50 0V246M368.50 0V246M408.50 0V246M448.50 0V246M487.50 0V246M527.50 0V246M567.50 0V246M0 3.50H577M0 43.50H577M0 83.50H577M0 122.50H288.50M0 162.50H577M0 202.50H577M0 242.50H577" stroke="#7e838a" stroke-width="1" fill="none"/><path d="M288.10 123.00H577" stroke="#9d3f3e" stroke-width="1.9"/><path d="M288.10 123.90V0" stroke="#41a043" stroke-width="1.9"/></svg>
<div class="vplabel" style="width:51px"><span class="t">Top</span><i style="left:40px"></i><b style="left:42px"></b></div>
<svg style="left:0;top:0" width="577" height="246"><path d="M36.3 180V210.4H65.8" stroke="#55575b" stroke-width="1" fill="none"/></svg>
<span class="t axl" style="left:39px;top:167.6px">y</span><span class="t axl" style="left:68.7px;top:199px">x</span>
</div>
<div class="vp" style="left:642px;top:180px;width:578px;height:246px"><svg class="vp3d" width="578" height="246" viewBox="0 0 578 246"><path d="M174.8 5.4L199.1 10.2M176.8 4.6L201.1 9.4M178.8 3.8L203.1 8.5M203.1 8.5L228.6 13.5M182.9 2.2L207.0 6.9M207.0 6.9L232.4 11.8M232.4 11.8L259.3 16.9M184.9 1.5L208.9 6.1M208.9 6.1L234.3 10.9M234.3 10.9L261.1 16.0M186.8 0.7L210.8 5.2M210.8 5.2L236.1 10.0M236.1 10.0L262.8 15.1M188.8 -0.1L212.7 4.4M212.7 4.4L238.0 9.2M238.0 9.2L264.6 14.2M264.6 14.2L292.7 19.5M192.6 -1.6L216.5 2.9M216.5 2.9L241.6 7.5M241.6 7.5L268.0 12.5M268.0 12.5L296.0 17.7M296.0 17.7L325.6 23.2M194.5 -2.3L218.3 2.1M218.3 2.1L243.3 6.7M243.3 6.7L269.7 11.6M269.7 11.6L297.6 16.7M297.6 16.7L327.1 22.2M196.4 -3.1L220.1 1.3M220.1 1.3L245.1 5.9M245.1 5.9L271.4 10.7M271.4 10.7L299.2 15.8M299.2 15.8L328.6 21.2M198.3 -3.8L221.9 0.5M221.9 0.5L246.8 5.1M246.8 5.1L273.1 9.9M273.1 9.9L300.8 14.9M300.8 14.9L330.1 20.3M330.1 20.3L361.1 25.9M202.0 -5.2L225.5 -1.0M225.5 -1.0L250.3 3.5M250.3 3.5L276.4 8.2M276.4 8.2L303.9 13.2M303.9 13.2L333.0 18.4M333.0 18.4L363.8 23.9M203.8 -5.9L227.3 -1.7M227.3 -1.7L252.0 2.7M252.0 2.7L278.0 7.4M278.0 7.4L305.4 12.3M305.4 12.3L334.4 17.5M334.4 17.5L365.1 23.0M365.1 23.0L397.6 28.8M229.0 -2.5L253.7 1.9M253.7 1.9L279.6 6.5M279.6 6.5L307.0 11.4M307.0 11.4L335.9 16.6M335.9 16.6L366.4 22.0M366.4 22.0L398.8 27.8M230.8 -3.2L255.3 1.1M255.3 1.1L281.2 5.7M281.2 5.7L308.5 10.5M308.5 10.5L337.3 15.6M337.3 15.6L367.7 21.0M367.7 21.0L400.0 26.7M400.0 26.7L434.2 32.8M234.2 -4.7L258.6 -0.4M258.6 -0.4L284.3 4.1M284.3 4.1L311.5 8.9M311.5 8.9L340.1 13.9M340.1 13.9L370.3 19.1M370.3 19.1L402.3 24.7M402.3 24.7L436.2 30.7M235.9 -5.4L260.2 -1.1M260.2 -1.1L285.9 3.3M285.9 3.3L312.9 8.0M312.9 8.0L341.4 13.0M341.4 13.0L371.6 18.2M371.6 18.2L403.4 23.7M403.4 23.7L437.2 29.6M437.2 29.6L473.1 35.8M237.5 -6.1L261.9 -1.9M261.9 -1.9L287.4 2.5M287.4 2.5L314.4 7.2M314.4 7.2L342.8 12.1M342.8 12.1L372.8 17.3M372.8 17.3L404.6 22.8M404.6 22.8L438.2 28.6M438.2 28.6L473.9 34.7M263.4 -2.6L289.0 1.8M289.0 1.8L315.8 6.4M315.8 6.4L344.1 11.2M344.1 11.2L374.0 16.4M374.0 16.4L405.7 21.8M405.7 21.8L439.2 27.5M439.2 27.5L474.7 33.6" stroke="#8d939b" stroke-width="1" fill="none" opacity="0.24"/><path d="M113.6 30.9L139.1 20.8M139.1 20.8L162.2 11.8M162.2 11.8L183.2 3.5M183.2 3.5L202.4 -4.1M116.1 31.5L141.6 21.4M141.6 21.4L164.6 12.3M164.6 12.3L185.6 3.9M185.6 3.9L204.8 -3.7M118.7 32.1L144.1 22.0M144.1 22.0L167.1 12.8M167.1 12.8L188.0 4.4M188.0 4.4L207.1 -3.2M121.3 32.7L146.6 22.5M146.6 22.5L169.5 13.3M169.5 13.3L190.4 4.9M190.4 4.9L209.4 -2.8M151.7 23.7L174.5 14.3M174.5 14.3L195.2 5.8M195.2 5.8L214.1 -2.0M214.1 -2.0L231.5 -9.1M154.2 24.2L177.0 14.8M177.0 14.8L197.7 6.3M197.7 6.3L216.5 -1.5M216.5 -1.5L233.8 -8.7M156.8 24.8L179.5 15.3M179.5 15.3L200.1 6.7M200.1 6.7L218.9 -1.1M218.9 -1.1L236.1 -8.3M159.4 25.4L182.0 15.9M182.0 15.9L202.6 7.2M202.6 7.2L221.3 -0.7M221.3 -0.7L238.5 -7.9M187.1 16.9L207.5 8.2M207.5 8.2L226.2 0.2M226.2 0.2L243.2 -7.1M189.7 17.4L210.0 8.7M210.0 8.7L228.6 0.7M228.6 0.7L245.6 -6.7M192.2 18.0L212.5 9.2M212.5 9.2L231.0 1.1M231.0 1.1L248.0 -6.3M194.8 18.5L215.1 9.6M215.1 9.6L233.5 1.6M233.5 1.6L250.4 -5.9M220.2 10.6L238.5 2.5M238.5 2.5L255.2 -5.0M222.7 11.1L241.0 2.9M241.0 2.9L257.6 -4.6M225.3 11.6L243.5 3.4M243.5 3.4L260.1 -4.2M227.9 12.1L246.0 3.8M246.0 3.8L262.6 -3.8M251.1 4.7L267.5 -2.9M253.7 5.2L270.0 -2.5M256.3 5.7L272.5 -2.1M258.9 6.1L275.1 -1.6M129.3 23.2L154.7 29.0M131.7 22.2L157.2 28.0M134.2 21.3L159.6 27.0M159.6 27.0L186.5 33.0M139.1 19.4L164.3 25.0M164.3 25.0L191.1 30.9M141.5 18.4L166.7 24.0M166.7 24.0L193.4 29.8M193.4 29.8L221.8 36.1M143.8 17.5L169.0 23.0M169.0 23.0L195.6 28.8M195.6 28.8L223.9 35.0M146.2 16.6L171.3 22.0M171.3 22.0L197.9 27.8M197.9 27.8L226.1 33.9M226.1 33.9L256.1 40.4M150.8 14.8L175.8 20.1M175.8 20.1L202.2 25.8M202.2 25.8L230.3 31.7M230.3 31.7L260.1 38.1M153.1 13.9L178.0 19.2M178.0 19.2L204.4 24.8M204.4 24.8L232.4 30.7M232.4 30.7L262.1 37.0M262.1 37.0L293.7 43.7M155.3 13.0L180.2 18.2M180.2 18.2L206.5 23.8M206.5 23.8L234.4 29.6M234.4 29.6L264.0 35.9M264.0 35.9L295.5 42.5M157.6 12.1L182.4 17.3M182.4 17.3L208.6 22.8M208.6 22.8L236.4 28.6M236.4 28.6L266.0 34.8M266.0 34.8L297.3 41.3M297.3 41.3L330.8 48.3M162.0 10.4L186.7 15.5M186.7 15.5L212.8 20.9M212.8 20.9L240.4 26.6M240.4 26.6L269.8 32.6M269.8 32.6L300.9 39.0M300.9 39.0L334.1 45.8M164.2 9.5L188.8 14.6M188.8 14.6L214.8 19.9M214.8 19.9L242.4 25.5M242.4 25.5L271.6 31.5M271.6 31.5L302.7 37.9M302.7 37.9L335.8 44.6M335.8 44.6L371.0 51.8M166.3 8.7L190.9 13.7M190.9 13.7L216.9 19.0M216.9 19.0L244.4 24.5M244.4 24.5L273.5 30.5M273.5 30.5L304.5 36.8M304.5 36.8L337.4 43.4M337.4 43.4L372.5 50.6M168.5 7.9L193.0 12.8M193.0 12.8L218.9 18.0M218.9 18.0L246.3 23.6M246.3 23.6L275.3 29.4M275.3 29.4L306.2 35.6M306.2 35.6L339.0 42.3M339.0 42.3L374.0 49.3M172.7 6.2L197.1 11.1M197.1 11.1L222.8 16.2M222.8 16.2L250.1 21.6M250.1 21.6L279.0 27.4M279.0 27.4L309.6 33.5M309.6 33.5L342.1 39.9M342.1 39.9L376.8 46.8M376.8 46.8L413.8 54.2M199.1 10.2L224.8 15.3M224.8 15.3L252.0 20.7M252.0 20.7L280.7 26.3M280.7 26.3L311.3 32.4M311.3 32.4L343.7 38.8M343.7 38.8L378.2 45.6M378.2 45.6L415.1 52.9M415.1 52.9L454.5 60.7M201.1 9.4L226.7 14.4M226.7 14.4L253.8 19.7M253.8 19.7L282.5 25.3M282.5 25.3L312.9 31.3M312.9 31.3L345.2 37.6M345.2 37.6L379.6 44.4M379.6 44.4L416.3 51.6M416.3 51.6L455.5 59.3M228.6 13.5L255.7 18.8M255.7 18.8L284.3 24.3M284.3 24.3L314.6 30.3M314.6 30.3L346.8 36.5M346.8 36.5L381.0 43.2M381.0 43.2L417.5 50.3M417.5 50.3L456.5 57.9M259.3 16.9L287.7 22.4M287.7 22.4L317.8 28.2M317.8 28.2L349.7 34.3M349.7 34.3L383.7 40.8M383.7 40.8L419.9 47.8M419.9 47.8L458.5 55.2M458.5 55.2L499.9 63.2M261.1 16.0L289.4 21.4M289.4 21.4L319.4 27.2M319.4 27.2L351.2 33.2M351.2 33.2L385.0 39.7M385.0 39.7L421.1 46.6M421.1 46.6L459.5 53.9M459.5 53.9L500.6 61.8M262.8 15.1L291.1 20.5M291.1 20.5L321.0 26.1M321.0 26.1L352.7 32.2M352.7 32.2L386.4 38.5M386.4 38.5L422.2 45.3M422.2 45.3L460.5 52.6M460.5 52.6L501.4 60.4M501.4 60.4L545.2 68.7M292.7 19.5L322.5 25.1M322.5 25.1L354.1 31.1M354.1 31.1L387.7 37.4M387.7 37.4L423.4 44.1M423.4 44.1L461.5 51.3M461.5 51.3L502.2 59.0M502.2 59.0L545.7 67.2M325.6 23.2L356.9 29.0M356.9 29.0L390.2 35.2M390.2 35.2L425.6 41.8M425.6 41.8L463.4 48.8M463.4 48.8L503.6 56.3M503.6 56.3L546.8 64.3M546.8 64.3L593.0 72.9M327.1 22.2L358.3 28.0M358.3 28.0L391.5 34.1M391.5 34.1L426.7 40.6M426.7 40.6L464.3 47.5M464.3 47.5L504.4 55.0M504.4 55.0L547.3 62.9M547.3 62.9L593.2 71.4M328.6 21.2L359.7 26.9M359.7 26.9L392.7 33.0M392.7 33.0L427.8 39.5M427.8 39.5L465.2 46.3M465.2 46.3L505.1 53.6M505.1 53.6L547.7 61.5M547.7 61.5L593.5 69.9M361.1 25.9L394.0 31.9M394.0 31.9L428.9 38.3M428.9 38.3L466.1 45.1M466.1 45.1L505.8 52.3M505.8 52.3L548.2 60.1M548.2 60.1L593.7 68.4M363.8 23.9L396.4 29.8M396.4 29.8L431.1 36.1M431.1 36.1L467.9 42.7M467.9 42.7L507.2 49.8M507.2 49.8L549.2 57.4M549.2 57.4L594.1 65.4M397.6 28.8L432.1 35.0M432.1 35.0L468.8 41.5M468.8 41.5L507.9 48.5M507.9 48.5L549.6 56.0M549.6 56.0L594.3 64.0M398.8 27.8L433.2 33.9M433.2 33.9L469.7 40.4M469.7 40.4L508.6 47.3M508.6 47.3L550.1 54.7M550.1 54.7L594.5 62.6M434.2 32.8L470.5 39.2M470.5 39.2L509.3 46.1M509.3 46.1L550.6 53.4M550.6 53.4L594.7 61.2M436.2 30.7L472.2 37.0M472.2 37.0L510.6 43.7M510.6 43.7L551.5 50.8M551.5 50.8L595.1 58.4M473.1 35.8L511.2 42.5M511.2 42.5L551.9 49.5M551.9 49.5L595.3 57.1M473.9 34.7L511.9 41.3M511.9 41.3L552.3 48.3M552.3 48.3L595.5 55.7M474.7 33.6L512.5 40.1M512.5 40.1L552.8 47.0M552.8 47.0L595.7 54.4" stroke="#8d939b" stroke-width="1" fill="none" opacity="0.31"/><path d="M-21.9 84.2L18.2 68.4M18.2 68.4L53.7 54.5M53.7 54.5L85.3 42.0M85.3 42.0L113.6 30.9M20.9 69.3L56.4 55.2M56.4 55.2L87.9 42.7M87.9 42.7L116.1 31.5M23.6 70.2L59.0 56.0M59.0 56.0L90.5 43.4M90.5 43.4L118.7 32.1M26.3 71.0L61.7 56.8M61.7 56.8L93.1 44.1M93.1 44.1L121.3 32.7M31.7 72.8L67.0 58.3M67.0 58.3L98.4 45.5M98.4 45.5L126.4 34.0M126.4 34.0L151.7 23.7M34.5 73.7L69.8 59.1M69.8 59.1L101.1 46.2M101.1 46.2L129.1 34.6M129.1 34.6L154.2 24.2M72.5 59.9L103.7 46.9M103.7 46.9L131.7 35.3M131.7 35.3L156.8 24.8M75.3 60.7L106.5 47.6M106.5 47.6L134.3 35.9M134.3 35.9L159.4 25.4M80.8 62.4L111.9 49.1M111.9 49.1L139.7 37.2M139.7 37.2L164.6 26.5M164.6 26.5L187.1 16.9M83.6 63.2L114.7 49.8M114.7 49.8L142.4 37.9M142.4 37.9L167.2 27.1M167.2 27.1L189.7 17.4M86.5 64.0L117.4 50.5M117.4 50.5L145.1 38.5M145.1 38.5L169.9 27.7M169.9 27.7L192.2 18.0M120.2 51.3L147.8 39.2M147.8 39.2L172.5 28.3M172.5 28.3L194.8 18.5M125.9 52.8L153.3 40.5M153.3 40.5L177.9 29.5M177.9 29.5L200.1 19.6M200.1 19.6L220.2 10.6M128.7 53.5L156.1 41.2M156.1 41.2L180.6 30.1M180.6 30.1L202.7 20.2M202.7 20.2L222.7 11.1M131.6 54.3L158.9 41.9M158.9 41.9L183.3 30.7M183.3 30.7L205.4 20.7M205.4 20.7L225.3 11.6M161.7 42.5L186.1 31.3M186.1 31.3L208.0 21.3M208.0 21.3L227.9 12.1M167.4 43.9L191.6 32.6M191.6 32.6L213.4 22.4M213.4 22.4L233.2 13.1M233.2 13.1L251.1 4.7M170.2 44.6L194.4 33.2M194.4 33.2L216.1 22.9M216.1 22.9L235.8 13.7M235.8 13.7L253.7 5.2M173.1 45.3L197.2 33.8M197.2 33.8L218.9 23.5M218.9 23.5L238.5 14.2M238.5 14.2L256.3 5.7M200.0 34.5L221.6 24.1M221.6 24.1L241.1 14.7M241.1 14.7L258.9 6.1M205.7 35.7L227.2 25.2M227.2 25.2L246.5 15.7M246.5 15.7L264.1 7.1M264.1 7.1L280.1 -0.8M208.6 36.4L230.0 25.8M230.0 25.8L249.2 16.3M249.2 16.3L266.7 7.6M266.7 7.6L282.7 -0.3M211.5 37.0L232.8 26.4M232.8 26.4L252.0 16.8M252.0 16.8L269.4 8.1M269.4 8.1L285.3 0.1M235.6 27.0L254.7 17.3M254.7 17.3L272.1 8.5M272.1 8.5L287.9 0.5M241.3 28.2L260.3 18.4M260.3 18.4L277.4 9.5M277.4 9.5L293.1 1.4M244.2 28.8L263.0 18.9M263.0 18.9L280.1 10.0M280.1 10.0L295.7 1.9M247.1 29.4L265.9 19.5M265.9 19.5L282.9 10.5M282.9 10.5L298.4 2.3M268.7 20.0L285.6 11.0M285.6 11.0L301.0 2.8M274.4 21.1L291.1 12.0M291.1 12.0L306.4 3.7M277.3 21.7L293.9 12.5M293.9 12.5L309.1 4.2M296.7 13.0L311.8 4.6M299.5 13.5L314.5 5.1M305.2 14.6L320.0 6.0M91.6 37.9L117.8 44.7M94.5 36.8L120.7 43.5M100.1 34.6L126.2 41.1M126.2 41.1L154.0 48.1M102.9 33.5L129.0 40.0M129.0 40.0L156.7 46.9M105.7 32.4L131.7 38.8M131.7 38.8L159.3 45.6M159.3 45.6L188.9 52.9M108.4 31.3L134.3 37.7M134.3 37.7L161.9 44.4M161.9 44.4L191.4 51.6M113.8 29.2L139.6 35.4M139.6 35.4L167.1 42.0M167.1 42.0L196.4 49.1M196.4 49.1L227.6 56.6M116.4 28.2L142.2 34.3M142.2 34.3L169.6 40.9M169.6 40.9L198.8 47.8M198.8 47.8L230.0 55.3M230.0 55.3L263.3 63.2M119.0 27.2L144.8 33.3M144.8 33.3L172.1 39.7M172.1 39.7L201.2 46.6M201.2 46.6L232.3 53.9M232.3 53.9L265.5 61.8M121.6 26.2L147.3 32.2M147.3 32.2L174.6 38.6M174.6 38.6L203.6 45.4M203.6 45.4L234.6 52.6M234.6 52.6L267.7 60.4M126.7 24.2L152.3 30.1M152.3 30.1L179.4 36.3M179.4 36.3L208.3 43.0M208.3 43.0L239.1 50.1M239.1 50.1L271.9 57.7M271.9 57.7L307.1 65.8M154.7 29.0L181.8 35.2M181.8 35.2L210.6 41.8M210.6 41.8L241.3 48.8M241.3 48.8L274.0 56.3M274.0 56.3L309.1 64.3M157.2 28.0L184.2 34.1M184.2 34.1L212.9 40.6M212.9 40.6L243.5 47.6M243.5 47.6L276.1 55.0M276.1 55.0L311.0 62.9M311.0 62.9L348.5 71.4M186.5 33.0L215.1 39.5M215.1 39.5L245.6 46.3M245.6 46.3L278.1 53.7M278.1 53.7L312.9 61.5M312.9 61.5L350.2 69.9M191.1 30.9L219.6 37.2M219.6 37.2L249.9 43.9M249.9 43.9L282.2 51.1M282.2 51.1L316.7 58.7M316.7 58.7L353.6 66.9M353.6 66.9L393.3 75.7M221.8 36.1L252.0 42.7M252.0 42.7L284.1 49.8M284.1 49.8L318.5 57.4M318.5 57.4L355.3 65.5M355.3 65.5L394.8 74.2M223.9 35.0L254.0 41.6M254.0 41.6L286.1 48.6M286.1 48.6L320.3 56.0M320.3 56.0L357.0 64.0M357.0 64.0L396.3 72.6M396.3 72.6L438.5 81.9M256.1 40.4L288.0 47.3M288.0 47.3L322.1 54.7M322.1 54.7L358.6 62.6M358.6 62.6L397.7 71.1M397.7 71.1L439.8 80.2M260.1 38.1L291.8 44.9M291.8 44.9L325.6 52.1M325.6 52.1L361.8 59.8M361.8 59.8L400.6 68.1M400.6 68.1L442.2 77.0M442.2 77.0L487.0 86.6M293.7 43.7L327.4 50.8M327.4 50.8L363.4 58.5M363.4 58.5L402.0 66.6M402.0 66.6L443.4 75.4M443.4 75.4L487.9 84.9M295.5 42.5L329.1 49.6M329.1 49.6L365.0 57.1M365.0 57.1L403.3 65.2M403.3 65.2L444.5 73.9M444.5 73.9L488.9 83.2M488.9 83.2L536.7 93.2M330.8 48.3L366.5 55.8M366.5 55.8L404.7 63.8M404.7 63.8L445.7 72.3M445.7 72.3L489.8 81.5M489.8 81.5L537.3 91.5M334.1 45.8L369.5 53.1M369.5 53.1L407.4 60.9M407.4 60.9L448.0 69.3M448.0 69.3L491.6 78.3M491.6 78.3L538.5 87.9M538.5 87.9L589.2 98.4M371.0 51.8L408.7 59.6M408.7 59.6L449.1 67.8M449.1 67.8L492.4 76.7M492.4 76.7L539.1 86.2M539.1 86.2L589.5 96.5M372.5 50.6L410.0 58.2M410.0 58.2L450.2 66.3M450.2 66.3L493.3 75.1M493.3 75.1L539.7 84.5M539.7 84.5L589.8 94.7M374.0 49.3L411.3 56.8M411.3 56.8L451.3 64.9M451.3 64.9L494.2 73.5M494.2 73.5L540.3 82.8M540.3 82.8L590.1 92.9M413.8 54.2L453.4 62.0M453.4 62.0L495.8 70.5M495.8 70.5L541.4 79.6M541.4 79.6L590.6 89.3M454.5 60.7L496.7 69.0M496.7 69.0L542.0 77.9M542.0 77.9L590.8 87.6M455.5 59.3L497.5 67.5M497.5 67.5L542.6 76.3M542.6 76.3L591.1 85.9M456.5 57.9L498.3 66.0M498.3 66.0L543.1 74.8M543.1 74.8L591.3 84.2M499.9 63.2L544.2 71.7M544.2 71.7L591.8 80.9M500.6 61.8L544.7 70.2M544.7 70.2L592.1 79.2M545.2 68.7L592.3 77.6M545.7 67.2L592.5 76.0" stroke="#8d939b" stroke-width="1" fill="none" opacity="0.39"/><path d="M-19.2 85.2L20.9 69.3M-16.5 86.2L23.6 70.2M-13.8 87.2L26.3 71.0M-8.3 89.2L31.7 72.8M-5.5 90.2L34.5 73.7M-2.7 91.3L37.3 74.6M37.3 74.6L72.5 59.9M-45.6 111.5L0.2 92.3M0.2 92.3L40.1 75.5M40.1 75.5L75.3 60.7M5.9 94.4L45.8 77.4M45.8 77.4L80.8 62.4M8.8 95.5L48.6 78.3M48.6 78.3L83.6 63.2M11.7 96.5L51.5 79.2M51.5 79.2L86.5 64.0M14.7 97.6L54.4 80.2M54.4 80.2L89.3 64.8M89.3 64.8L120.2 51.3M20.6 99.8L60.3 82.1M60.3 82.1L95.1 66.5M95.1 66.5L125.9 52.8M63.3 83.0L98.0 67.4M98.0 67.4L128.7 53.5M66.3 84.0L100.9 68.2M100.9 68.2L131.6 54.3M69.3 85.0L103.9 69.1M103.9 69.1L134.5 55.0M134.5 55.0L161.7 42.5M75.4 87.0L109.9 70.8M109.9 70.8L140.3 56.6M140.3 56.6L167.4 43.9M112.9 71.7L143.3 57.4M143.3 57.4L170.2 44.6M115.9 72.6L146.2 58.1M146.2 58.1L173.1 45.3M119.0 73.5L149.2 58.9M149.2 58.9L176.0 46.0M176.0 46.0L200.0 34.5M125.2 75.3L155.2 60.5M155.2 60.5L181.9 47.4M181.9 47.4L205.7 35.7M128.3 76.2L158.3 61.3M158.3 61.3L184.9 48.2M184.9 48.2L208.6 36.4M161.4 62.2L187.9 48.9M187.9 48.9L211.5 37.0M164.5 63.0L190.9 49.6M190.9 49.6L214.4 37.7M214.4 37.7L235.6 27.0M170.7 64.6L196.9 51.1M196.9 51.1L220.3 39.0M220.3 39.0L241.3 28.2M173.9 65.5L200.0 51.8M200.0 51.8L223.3 39.7M223.3 39.7L244.2 28.8M203.1 52.6L226.3 40.3M226.3 40.3L247.1 29.4M206.2 53.3L229.3 41.0M229.3 41.0L250.0 30.0M250.0 30.0L268.7 20.0M212.5 54.8L235.4 42.4M235.4 42.4L255.9 31.2M255.9 31.2L274.4 21.1M215.6 55.6L238.4 43.0M238.4 43.0L258.9 31.8M258.9 31.8L277.3 21.7M241.5 43.7L261.8 32.4M261.8 32.4L280.1 22.2M280.1 22.2L296.7 13.0M244.6 44.4L264.9 33.0M264.9 33.0L283.1 22.8M283.1 22.8L299.5 13.5M250.9 45.8L270.9 34.3M270.9 34.3L288.9 23.9M288.9 23.9L305.2 14.6M254.1 46.5L274.0 34.9M274.0 34.9L291.9 24.5M291.9 24.5L308.1 15.1M308.1 15.1L322.8 6.5M277.1 35.6L294.9 25.1M294.9 25.1L310.9 15.6M310.9 15.6L325.6 7.0M280.2 36.2L297.8 25.7M297.8 25.7L313.8 16.1M313.8 16.1L328.4 7.5M286.4 37.5L303.9 26.8M303.9 26.8L319.7 17.2M319.7 17.2L334.0 8.4M306.9 27.4L322.6 17.7M322.6 17.7L336.8 8.9M310.0 28.0L325.6 18.2M325.6 18.2L339.7 9.4M313.1 28.6L328.6 18.8M328.6 18.8L342.6 9.9M319.3 29.8L334.6 19.9M334.6 19.9L348.4 10.9M337.6 20.4L351.3 11.4M340.6 21.0L354.2 11.9M343.7 21.5L357.2 12.4M57.7 51.1L84.5 58.8M61.0 49.9L87.8 57.4M64.2 48.6L90.9 56.1M90.9 56.1L119.5 64.1M70.5 46.1L97.1 53.4M97.1 53.4L125.6 61.3M73.6 44.9L100.2 52.1M100.2 52.1L128.6 59.9M128.6 59.9L159.0 68.2M76.7 43.7L103.2 50.9M103.2 50.9L131.6 58.5M131.6 58.5L161.9 66.7M79.7 42.5L106.2 49.6M106.2 49.6L134.5 57.1M134.5 57.1L164.8 65.2M164.8 65.2L197.2 73.9M85.7 40.2L112.1 47.1M112.1 47.1L140.2 54.5M140.2 54.5L170.3 62.4M170.3 62.4L202.6 70.8M202.6 70.8L237.3 79.9M88.7 39.0L115.0 45.9M115.0 45.9L143.1 53.2M143.1 53.2L173.1 61.0M173.1 61.0L205.3 69.3M205.3 69.3L239.8 78.3M117.8 44.7L145.9 51.9M145.9 51.9L175.8 59.6M175.8 59.6L207.9 67.8M207.9 67.8L242.3 76.7M120.7 43.5L148.6 50.6M148.6 50.6L178.5 58.2M178.5 58.2L210.4 66.4M210.4 66.4L244.8 75.1M244.8 75.1L281.7 84.6M154.0 48.1L183.7 55.5M183.7 55.5L215.5 63.5M215.5 63.5L249.6 72.0M249.6 72.0L286.2 81.2M286.2 81.2L325.7 91.1M156.7 46.9L186.3 54.2M186.3 54.2L218.0 62.1M218.0 62.1L251.9 70.5M251.9 70.5L288.4 79.6M288.4 79.6L327.8 89.4M188.9 52.9L220.4 60.7M220.4 60.7L254.3 69.0M254.3 69.0L290.6 78.0M290.6 78.0L329.8 87.6M191.4 51.6L222.9 59.3M222.9 59.3L256.6 67.5M256.6 67.5L292.8 76.4M292.8 76.4L331.8 85.9M331.8 85.9L373.8 96.2M227.6 56.6L261.1 64.6M261.1 64.6L297.0 73.3M297.0 73.3L335.6 82.5M335.6 82.5L377.3 92.6M263.3 63.2L299.1 71.7M299.1 71.7L337.5 80.9M337.5 80.9L379.0 90.8M379.0 90.8L423.8 101.5M265.5 61.8L301.1 70.2M301.1 70.2L339.4 79.3M339.4 79.3L380.7 89.0M380.7 89.0L425.2 99.6M267.7 60.4L303.2 68.7M303.2 68.7L341.3 77.7M341.3 77.7L382.3 87.3M382.3 87.3L426.7 97.7M426.7 97.7L474.7 108.9M307.1 65.8L344.9 74.5M344.9 74.5L385.6 83.9M385.6 83.9L429.4 94.0M429.4 94.0L476.9 104.9M309.1 64.3L346.7 72.9M346.7 72.9L387.1 82.2M387.1 82.2L430.8 92.2M430.8 92.2L478.0 103.0M478.0 103.0L529.2 114.7M348.5 71.4L388.7 80.6M388.7 80.6L432.1 90.4M432.1 90.4L479.0 101.1M479.0 101.1L529.9 112.6M350.2 69.9L390.3 78.9M390.3 78.9L433.4 88.7M433.4 88.7L480.1 99.2M480.1 99.2L530.6 110.6M393.3 75.7L436.0 85.2M436.0 85.2L482.1 95.4M482.1 95.4L532.0 106.5M532.0 106.5L586.3 118.5M394.8 74.2L437.3 83.5M437.3 83.5L483.1 93.6M483.1 93.6L532.7 104.5M532.7 104.5L586.6 116.4M438.5 81.9L484.1 91.8M484.1 91.8L533.4 102.6M533.4 102.6L586.9 114.3M439.8 80.2L485.1 90.0M485.1 90.0L534.1 100.7M534.1 100.7L587.2 112.2M487.0 86.6L535.4 96.9M535.4 96.9L587.8 108.1M487.9 84.9L536.0 95.1M536.0 95.1L588.1 106.1M536.7 93.2L588.4 104.1M537.3 91.5L588.7 102.2" stroke="#8d939b" stroke-width="1" fill="none" opacity="0.46"/><path d="M-39.8 113.9L5.9 94.4M-36.9 115.2L8.8 95.5M-33.9 116.4L11.7 96.5M-31.0 117.6L14.7 97.6M-24.9 120.1L20.6 99.8M-21.9 121.4L23.7 100.9M23.7 100.9L63.3 83.0M-18.8 122.7L26.7 102.0M26.7 102.0L66.3 84.0M-15.7 124.0L29.8 103.1M29.8 103.1L69.3 85.0M-9.4 126.6L36.0 105.4M36.0 105.4L75.4 87.0M39.1 106.5L78.5 88.0M78.5 88.0L112.9 71.7M42.3 107.7L81.6 89.0M81.6 89.0L115.9 72.6M45.5 108.9L84.7 90.0M84.7 90.0L119.0 73.5M52.0 111.2L91.1 92.0M91.1 92.0L125.2 75.3M55.3 112.4L94.3 93.1M94.3 93.1L128.3 76.2M97.5 94.1L131.5 77.1M131.5 77.1L161.4 62.2M100.8 95.2L134.7 78.0M134.7 78.0L164.5 63.0M107.4 97.3L141.1 79.9M141.1 79.9L170.7 64.6M110.7 98.4L144.3 80.9M144.3 80.9L173.9 65.5M114.1 99.5L147.6 81.8M147.6 81.8L177.0 66.3M177.0 66.3L203.1 52.6M150.9 82.8L180.2 67.1M180.2 67.1L206.2 53.3M157.6 84.7L186.7 68.9M186.7 68.9L212.5 54.8M161.0 85.7L190.0 69.7M190.0 69.7L215.6 55.6M164.4 86.7L193.3 70.6M193.3 70.6L218.8 56.4M218.8 56.4L241.5 43.7M196.6 71.5L222.0 57.2M222.0 57.2L244.6 44.4M203.3 73.3L228.5 58.7M228.5 58.7L250.9 45.8M206.7 74.1L231.8 59.5M231.8 59.5L254.1 46.5M210.1 75.1L235.1 60.3M235.1 60.3L257.3 47.3M257.3 47.3L277.1 35.6M238.4 61.1L260.5 48.0M260.5 48.0L280.2 36.2M245.1 62.8L266.9 49.4M266.9 49.4L286.4 37.5M248.5 63.6L270.2 50.2M270.2 50.2L289.6 38.2M289.6 38.2L306.9 27.4M251.9 64.4L273.5 50.9M273.5 50.9L292.7 38.8M292.7 38.8L310.0 28.0M276.8 51.6L295.9 39.5M295.9 39.5L313.1 28.6M283.5 53.1L302.4 40.8M302.4 40.8L319.3 29.8M286.9 53.9L305.6 41.5M305.6 41.5L322.4 30.4M322.4 30.4L337.6 20.4M290.3 54.6L308.9 42.2M308.9 42.2L325.6 31.0M325.6 31.0L340.6 21.0M312.2 42.9L328.8 31.6M328.8 31.6L343.7 21.5M318.9 44.3L335.2 32.9M335.2 32.9L349.9 22.7M349.9 22.7L363.2 13.4M322.2 45.0L338.4 33.5M338.4 33.5L353.0 23.2M353.0 23.2L366.2 13.9M341.7 34.1L356.1 23.8M356.1 23.8L369.2 14.4M345.0 34.8L359.3 24.4M359.3 24.4L372.2 14.9M351.6 36.1L365.6 25.5M365.6 25.5L378.3 16.0M368.8 26.1L381.4 16.5M372.1 26.7L384.5 17.0M26.7 63.2L53.9 71.8M375.3 27.3L387.7 17.6M30.3 61.8L57.5 70.3M381.9 28.5L394.0 18.6M37.4 59.1L64.5 67.3M64.5 67.3L93.6 76.1M40.9 57.7L67.9 65.8M67.9 65.8L97.0 74.5M44.3 56.4L71.3 64.4M71.3 64.4L100.3 73.0M100.3 73.0L131.5 82.3M47.8 55.0L74.7 63.0M74.7 63.0L103.6 71.5M103.6 71.5L134.7 80.6M54.4 52.4L81.3 60.2M81.3 60.2L110.1 68.5M110.1 68.5L141.0 77.4M141.0 77.4L174.3 87.0M84.5 58.8L113.3 67.0M113.3 67.0L144.1 75.8M144.1 75.8L177.3 85.3M177.3 85.3L213.1 95.5M87.8 57.4L116.4 65.5M116.4 65.5L147.2 74.2M147.2 74.2L180.3 83.6M180.3 83.6L216.0 93.7M119.5 64.1L150.2 72.7M150.2 72.7L183.2 81.9M183.2 81.9L218.8 91.9M125.6 61.3L156.1 69.6M156.1 69.6L188.9 78.6M188.9 78.6L224.2 88.3M224.2 88.3L262.4 98.8M159.0 68.2L191.7 77.0M191.7 77.0L226.9 86.6M226.9 86.6L264.9 97.0M264.9 97.0L306.1 108.2M161.9 66.7L194.5 75.5M194.5 75.5L229.6 84.9M229.6 84.9L267.4 95.1M267.4 95.1L308.4 106.2M197.2 73.9L232.2 83.2M232.2 83.2L269.9 93.3M269.9 93.3L310.7 104.2M237.3 79.9L274.7 89.7M274.7 89.7L315.1 100.3M315.1 100.3L359.0 111.8M239.8 78.3L277.1 88.0M277.1 88.0L317.3 98.4M317.3 98.4L360.9 109.8M242.3 76.7L279.4 86.3M279.4 86.3L319.5 96.6M319.5 96.6L362.8 107.7M362.8 107.7L410.0 119.9M281.7 84.6L321.6 94.7M321.6 94.7L364.7 105.8M364.7 105.8L411.6 117.7M325.7 91.1L368.5 101.9M368.5 101.9L414.8 113.5M414.8 113.5L465.2 126.1M327.8 89.4L370.3 99.9M370.3 99.9L416.4 111.4M416.4 111.4L466.5 123.9M329.8 87.6L372.1 98.1M372.1 98.1L417.9 109.4M417.9 109.4L467.7 121.6M467.7 121.6L522.1 135.0M373.8 96.2L419.4 107.3M419.4 107.3L468.9 119.4M468.9 119.4L522.9 132.6M377.3 92.6L422.4 103.4M422.4 103.4L471.3 115.1M471.3 115.1L524.6 127.9M524.6 127.9L582.8 141.9M423.8 101.5L472.4 113.0M472.4 113.0L525.4 125.7M525.4 125.7L583.2 139.4M425.2 99.6L473.6 111.0M473.6 111.0L526.1 123.4M526.1 123.4L583.5 137.0M474.7 108.9L526.9 121.2M526.9 121.2L583.9 134.5M476.9 104.9L528.4 116.8M528.4 116.8L584.6 129.8M529.2 114.7L584.9 127.5M529.9 112.6L585.3 125.2M530.6 110.6L585.6 122.9" stroke="#8d939b" stroke-width="1" fill="none" opacity="0.54"/><path d="M-10.7 239.5L35.7 266.3M-6.2 128.0L39.1 106.5M-4.0 235.2L42.3 261.4M-3.0 129.3L42.3 107.7M-38.6 208.2L2.5 231.0M2.5 231.0L48.8 256.6M-52.7 156.1L0.2 130.7M0.2 130.7L45.5 108.9M-32.1 204.5L8.9 226.8M8.9 226.8L55.1 252.0M-46.1 159.4L6.8 133.4M6.8 133.4L52.0 111.2M-19.6 197.4L21.3 218.8M21.3 218.8L67.3 242.9M67.3 242.9L119.3 270.2M-42.7 161.0L10.1 134.8M10.1 134.8L55.3 112.4M-13.5 193.9L27.4 215.0M27.4 215.0L73.2 238.6M73.2 238.6L125.0 265.3M-39.4 162.7L13.5 136.2M13.5 136.2L58.6 113.6M58.6 113.6L97.5 94.1M-7.5 190.5L33.3 211.2M33.3 211.2L79.0 234.3M79.0 234.3L130.6 260.4M-35.9 164.3L16.9 137.6M16.9 137.6L61.9 114.8M61.9 114.8L100.8 95.2M-38.3 169.0L-1.7 187.2M-1.7 187.2L39.1 207.4M39.1 207.4L84.7 230.1M84.7 230.1L136.1 255.7M-29.0 167.7L23.8 140.5M23.8 140.5L68.7 117.3M68.7 117.3L107.4 97.3M-26.8 163.1L9.8 180.7M9.8 180.7L50.3 200.2M50.3 200.2L95.7 222.0M95.7 222.0L146.6 246.5M146.6 246.5L204.4 274.2M-25.5 169.5L27.2 142.0M27.2 142.0L72.1 118.6M72.1 118.6L110.7 98.4M-21.2 160.3L15.3 177.5M15.3 177.5L55.8 196.7M55.8 196.7L101.0 218.0M101.0 218.0L151.8 242.0M151.8 242.0L209.2 269.2M-21.9 171.2L30.8 143.4M30.8 143.4L75.5 119.8M75.5 119.8L114.1 99.5M-15.7 157.5L20.8 174.4M20.8 174.4L61.2 193.2M61.2 193.2L106.2 214.2M106.2 214.2L156.8 237.7M156.8 237.7L213.9 264.3M-18.3 173.0L34.3 144.9M34.3 144.9L79.0 121.1M79.0 121.1L117.5 100.6M117.5 100.6L150.9 82.8M-10.3 154.7L26.1 171.4M26.1 171.4L66.4 189.8M66.4 189.8L111.4 210.4M111.4 210.4L161.7 233.4M161.7 233.4L218.5 259.4M-11.0 176.5L41.5 147.9M41.5 147.9L86.1 123.7M86.1 123.7L124.4 102.8M124.4 102.8L157.6 84.7M-32.8 134.7L0.2 149.3M0.2 149.3L36.5 165.4M36.5 165.4L76.7 183.2M76.7 183.2L121.3 203.0M121.3 203.0L171.2 225.2M171.2 225.2L227.4 250.1M-7.3 178.3L45.2 149.5M45.2 149.5L89.7 125.0M89.7 125.0L127.8 104.0M127.8 104.0L161.0 85.7M-27.6 132.3L5.4 146.7M5.4 146.7L41.6 162.5M41.6 162.5L81.7 180.0M81.7 180.0L126.2 199.5M126.2 199.5L175.8 221.2M175.8 221.2L231.7 245.6M231.7 245.6L294.9 273.2M-3.5 180.2L48.9 151.0M48.9 151.0L93.3 126.3M93.3 126.3L131.3 105.1M131.3 105.1L164.4 86.7M-22.5 129.9L10.4 144.1M10.4 144.1L46.6 159.7M46.6 159.7L86.6 176.9M86.6 176.9L130.9 196.0M130.9 196.0L180.4 217.2M180.4 217.2L235.9 241.1M235.9 241.1L298.7 268.2M-62.5 217.4L0.3 182.0M0.3 182.0L52.6 152.6M52.6 152.6L96.9 127.6M96.9 127.6L134.9 106.2M134.9 106.2L167.8 87.7M167.8 87.7L196.6 71.5M-17.5 127.6L15.4 141.6M15.4 141.6L51.5 156.9M51.5 156.9L91.4 173.8M91.4 173.8L135.6 192.5M135.6 192.5L184.8 213.4M184.8 213.4L240.0 236.8M240.0 236.8L302.3 263.3M-54.8 221.9L8.0 185.8M8.0 185.8L60.2 155.7M60.2 155.7L104.3 130.3M104.3 130.3L142.0 108.6M142.0 108.6L174.7 89.7M174.7 89.7L203.3 73.3M-7.7 123.1L25.1 136.6M25.1 136.6L61.1 151.4M61.1 151.4L100.8 167.8M100.8 167.8L144.6 185.8M144.6 185.8L193.4 205.9M193.4 205.9L248.0 228.4M248.0 228.4L309.5 253.7M-50.8 224.3L11.9 187.7M11.9 187.7L64.0 157.3M64.0 157.3L108.0 131.7M108.0 131.7L145.7 109.7M145.7 109.7L178.2 90.7M178.2 90.7L206.7 74.1M-3.0 120.8L29.9 134.2M29.9 134.2L65.8 148.8M65.8 148.8L105.3 164.8M105.3 164.8L149.0 182.6M149.0 182.6L197.6 202.3M197.6 202.3L251.9 224.3M251.9 224.3L312.9 249.2M-46.8 226.6L15.8 189.6M15.8 189.6L67.9 158.9M67.9 158.9L111.8 133.1M111.8 133.1L149.3 110.9M149.3 110.9L181.8 91.8M181.8 91.8L210.1 75.1M-28.3 106.6L1.8 118.7M1.8 118.7L34.5 131.8M34.5 131.8L70.4 146.1M70.4 146.1L109.8 161.9M109.8 161.9L153.4 179.4M153.4 179.4L201.7 198.7M201.7 198.7L255.7 220.4M255.7 220.4L316.3 244.7M316.3 244.7L385.0 272.1M-42.8 229.0L19.8 191.6M19.8 191.6L71.8 160.6M71.8 160.6L115.6 134.4M115.6 134.4L153.0 112.1M153.0 112.1L185.3 92.8M185.3 92.8L213.6 76.0M213.6 76.0L238.4 61.1M-23.6 104.6L6.4 116.5M6.4 116.5L39.1 129.4M39.1 129.4L74.9 143.6M74.9 143.6L114.2 159.1M114.2 159.1L157.6 176.2M157.6 176.2L205.7 195.2M205.7 195.2L259.4 216.4M259.4 216.4L319.6 240.2M319.6 240.2L387.7 267.1M-34.6 233.8L28.0 195.6M28.0 195.6L79.7 163.9M79.7 163.9L123.3 137.3M123.3 137.3L160.5 114.5M160.5 114.5L192.6 94.9M192.6 94.9L220.5 77.8M220.5 77.8L245.1 62.8M-14.5 100.8L15.5 112.3M15.5 112.3L48.1 124.8M48.1 124.8L83.7 138.5M83.7 138.5L122.8 153.6M122.8 153.6L165.9 170.1M165.9 170.1L213.5 188.5M213.5 188.5L266.6 208.9M266.6 208.9L326.0 231.7M326.0 231.7L393.0 257.5M-30.4 236.3L32.1 197.6M32.1 197.6L83.8 165.6M83.8 165.6L127.2 138.7M127.2 138.7L164.3 115.8M164.3 115.8L196.2 96.0M196.2 96.0L224.1 78.7M224.1 78.7L248.5 63.6M-10.0 98.9L19.9 110.2M19.9 110.2L52.5 122.6M52.5 122.6L88.0 136.1M88.0 136.1L127.0 150.9M127.0 150.9L169.9 167.2M169.9 167.2L217.3 185.2M217.3 185.2L270.1 205.2M270.1 205.2L329.1 227.6M329.1 227.6L395.6 252.8M-26.2 238.8L36.3 199.6M36.3 199.6L87.9 167.3M87.9 167.3L131.2 140.1M131.2 140.1L168.1 117.0M168.1 117.0L199.9 97.0M199.9 97.0L227.6 79.7M227.6 79.7L251.9 64.4M-5.6 97.0L24.3 108.2M24.3 108.2L56.8 120.4M56.8 120.4L92.3 133.7M92.3 133.7L131.1 148.2M131.1 148.2L173.9 164.2M173.9 164.2L221.1 181.9M221.1 181.9L273.5 201.6M273.5 201.6L332.2 223.5M332.2 223.5L398.1 248.2M-21.9 241.3L40.5 201.7M40.5 201.7L92.0 169.0M92.0 169.0L135.2 141.6M135.2 141.6L171.9 118.2M171.9 118.2L203.6 98.1M203.6 98.1L231.2 80.6M231.2 80.6L255.4 65.2M255.4 65.2L276.8 51.6M-28.9 85.0L-1.3 95.2M-1.3 95.2L28.6 106.2M28.6 106.2L61.1 118.2M61.1 118.2L96.5 131.3M96.5 131.3L135.2 145.6M135.2 145.6L177.8 161.4M177.8 161.4L224.8 178.7M224.8 178.7L276.9 198.0M276.9 198.0L335.2 219.5M335.2 219.5L400.6 243.7M400.6 243.7L474.6 271.1M-13.2 246.4L49.1 205.9M49.1 205.9L100.3 172.5M100.3 172.5L143.2 144.5M143.2 144.5L179.7 120.8M179.7 120.8L211.1 100.3M211.1 100.3L238.4 82.5M238.4 82.5L262.3 66.9M262.3 66.9L283.5 53.1M-20.3 81.6L7.3 91.6M7.3 91.6L37.1 102.3M37.1 102.3L69.4 114.0M69.4 114.0L104.6 126.7M104.6 126.7L143.1 140.5M143.1 140.5L185.3 155.7M185.3 155.7L231.9 172.5M231.9 172.5L283.5 191.1M283.5 191.1L340.9 211.8M340.9 211.8L405.4 235.1M405.4 235.1L478.1 261.3M-8.7 249.1L53.4 208.0M53.4 208.0L104.6 174.3M104.6 174.3L147.3 146.0M147.3 146.0L183.7 122.0M183.7 122.0L214.9 101.4M214.9 101.4L242.1 83.5M242.1 83.5L265.9 67.8M265.9 67.8L286.9 53.9M-16.1 80.0L11.4 89.8M11.4 89.8L41.2 100.4M41.2 100.4L73.5 111.9M73.5 111.9L108.6 124.4M108.6 124.4L147.0 138.0M147.0 138.0L189.0 153.0M189.0 153.0L235.4 169.5M235.4 169.5L286.7 187.8M286.7 187.8L343.8 208.1M343.8 208.1L407.7 230.9M407.7 230.9L479.7 256.5M-4.2 251.7L57.9 210.2M57.9 210.2L108.8 176.1M108.8 176.1L151.5 147.5M151.5 147.5L187.7 123.3M187.7 123.3L218.7 102.5M218.7 102.5L245.7 84.5M245.7 84.5L269.4 68.6M269.4 68.6L290.3 54.6M-12.0 78.4L15.5 88.0M15.5 88.0L45.3 98.5M45.3 98.5L77.5 109.8M77.5 109.8L112.5 122.1M112.5 122.1L150.8 135.6M150.8 135.6L192.7 150.3M192.7 150.3L238.8 166.5M238.8 166.5L289.8 184.5M289.8 184.5L346.5 204.4M346.5 204.4L409.9 226.7M409.9 226.7L481.3 251.8M0.4 254.4L62.3 212.4M62.3 212.4L113.2 177.9M113.2 177.9L155.7 149.1M155.7 149.1L191.7 124.6M191.7 124.6L222.6 103.7M222.6 103.7L249.4 85.5M249.4 85.5L273.0 69.5M273.0 69.5L293.7 55.4M293.7 55.4L312.2 42.9M-7.9 76.8L19.6 86.3M19.6 86.3L49.3 96.6M49.3 96.6L81.5 107.8M81.5 107.8L116.4 119.9M116.4 119.9L154.5 133.2M154.5 133.2L196.3 147.7M196.3 147.7L242.2 163.6M242.2 163.6L292.9 181.3M292.9 181.3L349.2 200.8M349.2 200.8L412.2 222.7M412.2 222.7L482.9 247.3M482.9 247.3L563.1 275.2M9.7 259.9L71.4 216.8M71.4 216.8L122.0 181.6M122.0 181.6L164.1 152.2M164.1 152.2L199.8 127.3M199.8 127.3L230.4 105.9M230.4 105.9L257.0 87.4M257.0 87.4L280.2 71.2M280.2 71.2L300.7 57.0M300.7 57.0L318.9 44.3M0.1 73.6L27.6 82.9M27.6 82.9L57.2 93.0M57.2 93.0L89.2 103.8M89.2 103.8L124.0 115.6M124.0 115.6L161.8 128.5M161.8 128.5L203.2 142.5M203.2 142.5L248.7 158.0M248.7 158.0L298.9 175.0M298.9 175.0L354.5 193.8M354.5 193.8L416.5 214.9M416.5 214.9L486.0 238.5M486.0 238.5L564.6 265.1M14.4 262.7L76.0 219.1M76.0 219.1L126.4 183.4M126.4 183.4L168.4 153.7M168.4 153.7L203.9 128.6M203.9 128.6L234.4 107.1M234.4 107.1L260.7 88.4M260.7 88.4L283.8 72.1M283.8 72.1L304.2 57.7M304.2 57.7L322.2 45.0M4.1 72.1L31.5 81.3M31.5 81.3L61.0 91.2M61.0 91.2L93.0 101.9M93.0 101.9L127.7 113.5M127.7 113.5L165.4 126.2M165.4 126.2L206.6 140.0M206.6 140.0L251.9 155.2M251.9 155.2L301.8 171.9M301.8 171.9L357.0 190.4M357.0 190.4L418.5 211.1M418.5 211.1L487.5 234.2M487.5 234.2L565.3 260.3M19.2 265.5L80.7 221.4M80.7 221.4L131.0 185.3M131.0 185.3L172.8 155.3M172.8 155.3L208.1 130.0M208.1 130.0L238.4 108.3M238.4 108.3L264.6 89.5M264.6 89.5L287.5 73.0M287.5 73.0L307.7 58.5M307.7 58.5L325.6 45.7M325.6 45.7L341.7 34.1M8.0 70.6L35.3 79.6M35.3 79.6L64.8 89.4M64.8 89.4L96.7 100.0M96.7 100.0L131.3 111.5M131.3 111.5L168.9 123.9M168.9 123.9L210.0 137.5M210.0 137.5L255.0 152.5M255.0 152.5L304.6 168.9M304.6 168.9L359.5 187.1M359.5 187.1L420.6 207.3M420.6 207.3L489.0 230.0M489.0 230.0L566.0 255.5M24.1 268.3L85.4 223.7M85.4 223.7L135.5 187.2M135.5 187.2L177.2 156.9M177.2 156.9L212.3 131.3M212.3 131.3L242.4 109.4M242.4 109.4L268.4 90.5M268.4 90.5L291.2 73.9M291.2 73.9L311.2 59.3M311.2 59.3L329.0 46.4M329.0 46.4L345.0 34.8M11.8 69.1L39.2 78.0M39.2 78.0L68.6 87.7M68.6 87.7L100.4 98.1M100.4 98.1L134.9 109.4M134.9 109.4L172.4 121.7M172.4 121.7L213.3 135.1M213.3 135.1L258.1 149.8M258.1 149.8L307.4 165.9M307.4 165.9L362.0 183.8M362.0 183.8L422.6 203.7M422.6 203.7L490.4 225.9M490.4 225.9L566.7 250.9M34.0 274.2L95.1 228.4M95.1 228.4L144.8 191.1M144.8 191.1L186.1 160.2M186.1 160.2L220.8 134.1M220.8 134.1L250.5 111.8M250.5 111.8L276.2 92.5M276.2 92.5L298.7 75.7M298.7 75.7L318.4 60.9M318.4 60.9L335.9 47.8M335.9 47.8L351.6 36.1M19.3 66.1L46.6 74.9M46.6 74.9L76.0 84.3M76.0 84.3L107.7 94.4M107.7 94.4L141.9 105.4M141.9 105.4L179.2 117.3M179.2 117.3L219.8 130.3M219.8 130.3L264.1 144.6M264.1 144.6L312.9 160.2M312.9 160.2L366.8 177.4M366.8 177.4L426.5 196.6M426.5 196.6L493.2 217.9M493.2 217.9L568.0 241.9M568.0 241.9L652.7 269.1M39.0 277.2L100.0 230.8M100.0 230.8L149.5 193.1M149.5 193.1L190.6 161.8M190.6 161.8L225.1 135.5M225.1 135.5L254.7 113.0M254.7 113.0L280.2 93.6M280.2 93.6L302.4 76.6M302.4 76.6L322.0 61.7M322.0 61.7L339.4 48.5M339.4 48.5L354.9 36.7M354.9 36.7L368.8 26.1M23.1 64.7L50.3 73.3M50.3 73.3L79.6 82.6M79.6 82.6L111.2 92.6M111.2 92.6L145.4 103.4M145.4 103.4L182.5 115.2M182.5 115.2L222.9 128.0M222.9 128.0L267.1 142.0M267.1 142.0L315.6 157.4M315.6 157.4L369.1 174.3M369.1 174.3L428.4 193.1M428.4 193.1L494.5 214.1M494.5 214.1L568.7 237.6M568.7 237.6L652.4 264.1M44.2 280.2L104.9 233.2M104.9 233.2L154.3 195.1M154.3 195.1L195.1 163.5M195.1 163.5L229.5 136.9M229.5 136.9L258.8 114.2M258.8 114.2L284.2 94.6M284.2 94.6L306.2 77.6M306.2 77.6L325.7 62.5M325.7 62.5L342.9 49.2M342.9 49.2L358.3 37.3M358.3 37.3L372.1 26.7M53.9 71.8L83.2 80.9M83.2 80.9L114.7 90.8M114.7 90.8L148.8 101.5M148.8 101.5L185.8 113.1M185.8 113.1L226.0 125.7M226.0 125.7L270.0 139.5M270.0 139.5L318.2 154.6M318.2 154.6L371.4 171.3M371.4 171.3L430.3 189.7M430.3 189.7L495.8 210.3M495.8 210.3L569.3 233.3M569.3 233.3L652.2 259.3M49.4 283.2L110.0 235.7M110.0 235.7L159.1 197.1M159.1 197.1L199.7 165.2M199.7 165.2L233.9 138.3M233.9 138.3L263.0 115.4M263.0 115.4L288.2 95.7M288.2 95.7L310.1 78.5M310.1 78.5L329.3 63.4M329.3 63.4L346.4 50.0M346.4 50.0L361.6 38.0M361.6 38.0L375.3 27.3M57.5 70.3L86.7 79.3M86.7 79.3L118.1 89.1M118.1 89.1L152.1 99.6M152.1 99.6L189.0 111.0M189.0 111.0L229.1 123.5M229.1 123.5L272.8 137.0M272.8 137.0L320.8 151.9M320.8 151.9L373.6 168.3M373.6 168.3L432.1 186.4M432.1 186.4L497.1 206.6M497.1 206.6L569.9 229.2M569.9 229.2L651.9 254.6M60.0 289.5L120.2 240.7M120.2 240.7L168.9 201.2M168.9 201.2L209.1 168.6M209.1 168.6L242.8 141.2M242.8 141.2L271.5 117.9M271.5 117.9L296.3 97.8M296.3 97.8L317.8 80.4M317.8 80.4L336.8 65.0M336.8 65.0L353.5 51.4M353.5 51.4L368.5 39.3M368.5 39.3L381.9 28.5M93.6 76.1L124.9 85.6M124.9 85.6L158.7 95.9M158.7 95.9L195.3 107.0M195.3 107.0L235.0 119.0M235.0 119.0L278.4 132.2M278.4 132.2L325.8 146.6M325.8 146.6L378.0 162.5M378.0 162.5L435.7 179.9M435.7 179.9L499.6 199.4M499.6 199.4L571.1 221.1M571.1 221.1L651.4 245.4M65.4 292.7L125.4 243.2M125.4 243.2L173.9 203.2M173.9 203.2L213.8 170.3M213.8 170.3L247.3 142.7M247.3 142.7L275.9 119.2M275.9 119.2L300.4 98.9M300.4 98.9L321.8 81.3M321.8 81.3L340.5 65.9M340.5 65.9L357.1 52.2M357.1 52.2L371.9 40.0M371.9 40.0L385.2 29.1M385.2 29.1L397.1 19.2M97.0 74.5L128.2 83.9M128.2 83.9L161.9 94.0M161.9 94.0L198.4 105.0M198.4 105.0L237.9 116.9M237.9 116.9L281.1 129.9M281.1 129.9L328.3 144.0M328.3 144.0L380.2 159.6M380.2 159.6L437.4 176.8M437.4 176.8L500.9 195.9M500.9 195.9L571.7 217.1M571.7 217.1L651.2 241.0M70.9 295.9L130.7 245.8M130.7 245.8L178.9 205.3M178.9 205.3L218.6 172.0M218.6 172.0L251.9 144.2M251.9 144.2L280.2 120.4M280.2 120.4L304.5 100.0M304.5 100.0L325.7 82.3M325.7 82.3L344.3 66.7M344.3 66.7L360.7 52.9M360.7 52.9L375.4 40.7M375.4 40.7L388.5 29.7M388.5 29.7L400.3 19.7M131.5 82.3L165.0 92.2M165.0 92.2L201.4 103.0M201.4 103.0L240.8 114.8M240.8 114.8L283.8 127.5M283.8 127.5L330.7 141.5M330.7 141.5L382.3 156.8M382.3 156.8L439.1 173.7M439.1 173.7L502.1 192.4M502.1 192.4L572.3 213.3M572.3 213.3L651.0 236.7M136.0 248.4L184.0 207.5M184.0 207.5L223.5 173.8M223.5 173.8L256.5 145.6M256.5 145.6L284.6 121.7M284.6 121.7L308.7 101.1M308.7 101.1L329.7 83.2M329.7 83.2L348.1 67.6M348.1 67.6L364.4 53.7M364.4 53.7L378.9 41.3M378.9 41.3L391.8 30.3M391.8 30.3L403.5 20.3M134.7 80.6L168.2 90.5M168.2 90.5L204.4 101.1M204.4 101.1L243.7 112.7M243.7 112.7L286.4 125.2M286.4 125.2L333.1 139.0M333.1 139.0L384.3 154.1M384.3 154.1L440.8 170.7M440.8 170.7L503.2 189.1M503.2 189.1L572.8 209.5M572.8 209.5L650.8 232.5M146.9 253.7L194.3 211.8M194.3 211.8L233.3 177.4M233.3 177.4L265.9 148.7M265.9 148.7L293.5 124.3M293.5 124.3L317.2 103.4M317.2 103.4L337.7 85.2M337.7 85.2L355.8 69.3M355.8 69.3L371.7 55.2M371.7 55.2L385.9 42.7M385.9 42.7L398.6 31.5M398.6 31.5L410.0 21.4M174.3 87.0L210.3 97.3M210.3 97.3L249.2 108.6M249.2 108.6L291.6 120.8M291.6 120.8L337.8 134.1M337.8 134.1L388.3 148.7M388.3 148.7L444.0 164.7M444.0 164.7L505.5 182.5M505.5 182.5L573.9 202.2M573.9 202.2L650.3 224.2M152.4 256.4L199.6 214.0M199.6 214.0L238.3 179.2M238.3 179.2L270.6 150.2M270.6 150.2L298.0 125.6M298.0 125.6L321.4 104.5M321.4 104.5L341.8 86.2M341.8 86.2L359.7 70.1M359.7 70.1L375.4 56.0M375.4 56.0L389.4 43.4M389.4 43.4L402.0 32.1M402.0 32.1L413.3 21.9M213.1 95.5L251.9 106.6M251.9 106.6L294.1 118.6M294.1 118.6L340.0 131.7M340.0 131.7L390.3 146.1M390.3 146.1L445.6 161.9M445.6 161.9L506.6 179.3M506.6 179.3L574.4 198.6M574.4 198.6L650.1 220.3M158.0 259.2L204.9 216.2M204.9 216.2L243.3 181.1M243.3 181.1L275.4 151.8M275.4 151.8L302.5 126.9M302.5 126.9L325.8 105.6M325.8 105.6L345.9 87.2M345.9 87.2L363.6 71.0M363.6 71.0L379.2 56.8M379.2 56.8L393.0 44.1M393.0 44.1L405.4 32.7M405.4 32.7L416.6 22.5M216.0 93.7L254.6 104.6M254.6 104.6L296.5 116.5M296.5 116.5L342.3 129.4M342.3 129.4L392.2 143.5M392.2 143.5L447.2 159.0M447.2 159.0L507.7 176.2M507.7 176.2L574.9 195.2M574.9 195.2L649.9 216.3M163.7 261.9L210.3 218.5M210.3 218.5L248.5 182.9M248.5 182.9L280.2 153.3M280.2 153.3L307.1 128.3M307.1 128.3L330.1 106.8M330.1 106.8L350.1 88.2M350.1 88.2L367.5 71.9M367.5 71.9L382.9 57.5M382.9 57.5L396.6 44.8M396.6 44.8L408.9 33.3M408.9 33.3L419.9 23.1M218.8 91.9L257.2 102.6M257.2 102.6L299.0 114.3M299.0 114.3L344.5 127.1M344.5 127.1L394.1 141.0M394.1 141.0L448.7 156.2M448.7 156.2L508.8 173.1M508.8 173.1L575.4 191.7M575.4 191.7L649.7 212.5M175.3 267.6L221.3 223.1M221.3 223.1L258.8 186.7M258.8 186.7L290.0 156.5M290.0 156.5L316.4 131.0M316.4 131.0L338.9 109.1M338.9 109.1L358.4 90.2M358.4 90.2L375.5 73.7M375.5 73.7L390.5 59.1M390.5 59.1L403.9 46.2M403.9 46.2L415.8 34.6M415.8 34.6L426.6 24.2M262.4 98.8L303.8 110.2M303.8 110.2L348.8 122.5M348.8 122.5L397.9 136.0M397.9 136.0L451.7 150.8M451.7 150.8L510.9 167.1M510.9 167.1L576.4 185.1M576.4 185.1L649.3 205.1M181.2 270.5L226.9 225.4M226.9 225.4L264.1 188.6M264.1 188.6L295.0 158.1M295.0 158.1L321.1 132.3M321.1 132.3L343.4 110.3M343.4 110.3L362.7 91.2M362.7 91.2L379.5 74.6M379.5 74.6L394.4 59.9M394.4 59.9L407.6 46.9M407.6 46.9L419.3 35.2M419.3 35.2L429.9 24.8M306.1 108.2L350.9 120.3M350.9 120.3L399.7 133.6M399.7 133.6L453.1 148.2M453.1 148.2L511.9 164.2M511.9 164.2L576.9 181.8M576.9 181.8L649.1 201.5M187.2 273.4L232.5 227.8M232.5 227.8L269.4 190.6M269.4 190.6L300.0 159.7M300.0 159.7L325.8 133.7M325.8 133.7L347.9 111.5M347.9 111.5L366.9 92.3M366.9 92.3L383.6 75.5M383.6 75.5L398.2 60.7M398.2 60.7L411.2 47.6M411.2 47.6L422.9 35.9M422.9 35.9L433.3 25.4M308.4 106.2L352.9 118.2M352.9 118.2L401.5 131.2M401.5 131.2L454.6 145.5M454.6 145.5L512.9 161.3M512.9 161.3L577.4 178.6M577.4 178.6L648.9 197.9M193.3 276.4L238.2 230.2M238.2 230.2L274.8 192.6M274.8 192.6L305.1 161.4M305.1 161.4L330.6 135.1M330.6 135.1L352.4 112.7M352.4 112.7L371.2 93.3M371.2 93.3L387.7 76.4M387.7 76.4L402.1 61.5M402.1 61.5L415.0 48.3M415.0 48.3L426.4 36.5M426.4 36.5L436.7 25.9M310.7 104.2L355.0 116.0M355.0 116.0L403.2 128.9M403.2 128.9L456.0 143.0M456.0 143.0L513.9 158.5M513.9 158.5L577.8 175.5M577.8 175.5L648.7 194.4M205.7 282.5L249.9 235.0M249.9 235.0L285.7 196.5M285.7 196.5L315.4 164.7M315.4 164.7L340.3 137.9M340.3 137.9L361.6 115.1M361.6 115.1L379.9 95.4M379.9 95.4L395.9 78.3M395.9 78.3L410.0 63.2M410.0 63.2L422.5 49.8M422.5 49.8L433.6 37.8M433.6 37.8L443.6 27.1M359.0 111.8L406.6 124.3M406.6 124.3L458.7 138.0M458.7 138.0L515.8 152.9M515.8 152.9L578.7 169.4M578.7 169.4L648.4 187.7M212.0 285.5L255.8 237.5M255.8 237.5L291.3 198.6M291.3 198.6L320.6 166.4M320.6 166.4L345.2 139.4M345.2 139.4L366.2 116.4M366.2 116.4L384.3 96.5M384.3 96.5L400.1 79.2M400.1 79.2L414.0 64.0M414.0 64.0L426.3 50.5M426.3 50.5L437.2 38.5M437.2 38.5L447.1 27.7M360.9 109.8L408.3 122.1M408.3 122.1L460.1 135.5M460.1 135.5L516.8 150.3M516.8 150.3L579.2 166.5M579.2 166.5L648.2 184.4M218.4 288.7L261.8 240.0M261.8 240.0L296.9 200.6M296.9 200.6L325.9 168.1M325.9 168.1L350.2 140.8M350.2 140.8L370.9 117.6M370.9 117.6L388.8 97.6M388.8 97.6L404.3 80.1M404.3 80.1L418.0 64.8M418.0 64.8L430.1 51.2M430.1 51.2L440.9 39.2M440.9 39.2L450.5 28.3M410.0 119.9L461.4 133.1M461.4 133.1L517.7 147.6M517.7 147.6L579.6 163.6M579.6 163.6L648.0 181.2M224.9 291.8L267.9 242.5M267.9 242.5L302.6 202.7M302.6 202.7L331.2 169.9M331.2 169.9L355.2 142.3M355.2 142.3L375.7 118.8M375.7 118.8L393.3 98.7M393.3 98.7L408.6 81.1M408.6 81.1L422.0 65.6M422.0 65.6L433.9 52.0M433.9 52.0L444.5 39.8M444.5 39.8L454.0 28.9M411.6 117.7L462.7 130.8M462.7 130.8L518.6 145.0M518.6 145.0L580.0 160.7M238.2 298.3L280.3 247.7M280.3 247.7L314.2 206.9M314.2 206.9L342.1 173.4M342.1 173.4L365.4 145.3M365.4 145.3L385.3 121.4M385.3 121.4L402.3 100.8M402.3 100.8L417.2 83.0M417.2 83.0L430.2 67.3M430.2 67.3L441.7 53.5M441.7 53.5L451.9 41.2M451.9 41.2L461.1 30.1M465.2 126.1L520.4 139.9M520.4 139.9L580.9 155.1M286.6 250.3L320.0 209.1M320.0 209.1L347.6 175.1M347.6 175.1L370.6 146.8M370.6 146.8L390.1 122.7M390.1 122.7L406.9 102.0M406.9 102.0L421.5 84.0M421.5 84.0L434.3 68.2M434.3 68.2L445.6 54.3M445.6 54.3L455.7 41.8M455.7 41.8L464.7 30.7M466.5 123.9L521.2 137.5M521.2 137.5L581.3 152.4M292.9 253.0L326.0 211.2M326.0 211.2L353.1 176.9M353.1 176.9L375.8 148.3M375.8 148.3L395.0 124.0M395.0 124.0L411.5 103.1M411.5 103.1L425.9 84.9M425.9 84.9L438.4 69.1M438.4 69.1L449.6 55.0M449.6 55.0L459.4 42.5M459.4 42.5L468.3 31.3M522.1 135.0L581.7 149.7M299.4 255.7L332.0 213.4M332.0 213.4L358.7 178.8M358.7 178.8L381.0 149.8M381.0 149.8L400.0 125.3M400.0 125.3L416.2 104.2M416.2 104.2L430.3 85.9M430.3 85.9L442.6 69.9M442.6 69.9L453.5 55.8M453.5 55.8L463.2 43.2M463.2 43.2L471.9 31.9M522.9 132.6L582.0 147.1M312.6 261.2L344.2 217.9M344.2 217.9L370.1 182.5M370.1 182.5L391.7 152.9M391.7 152.9L410.0 127.9M410.0 127.9L425.6 106.5M425.6 106.5L439.2 87.9M439.2 87.9L451.1 71.7M451.1 71.7L461.6 57.3M461.6 57.3L470.9 44.6M470.9 44.6L479.2 33.2M319.3 264.0L350.5 220.2M350.5 220.2L375.9 184.3M375.9 184.3L397.1 154.5M397.1 154.5L415.1 129.3M415.1 129.3L430.4 107.7M430.4 107.7L443.7 88.9M443.7 88.9L455.3 72.6M455.3 72.6L465.6 58.1M465.6 58.1L474.7 45.3M474.7 45.3L482.9 33.8M326.1 266.9L356.8 222.5M356.8 222.5L381.8 186.2M381.8 186.2L402.6 156.1M402.6 156.1L420.2 130.6M420.2 130.6L435.2 108.8M435.2 108.8L448.3 90.0M448.3 90.0L459.6 73.5M459.6 73.5L469.7 58.9M469.7 58.9L478.6 46.0M478.6 46.0L486.6 34.4M333.0 269.8L363.1 224.8M363.1 224.8L387.7 188.1M387.7 188.1L408.1 157.7M408.1 157.7L425.3 132.0M425.3 132.0L440.1 110.0M440.1 110.0L452.8 91.0M452.8 91.0L464.0 74.4M464.0 74.4L473.8 59.7M473.8 59.7L482.5 46.7M482.5 46.7L490.3 35.1M347.1 275.6L376.1 229.5M376.1 229.5L399.7 192.0M399.7 192.0L419.3 161.0M419.3 161.0L435.8 134.8M435.8 134.8L449.9 112.4M449.9 112.4L462.1 93.0M462.1 93.0L472.7 76.2M472.7 76.2L482.1 61.3M482.1 61.3L490.4 48.1M490.4 48.1L497.8 36.4M354.2 278.6L382.7 231.9M382.7 231.9L405.8 194.0M405.8 194.0L425.0 162.6M425.0 162.6L441.1 136.2M441.1 136.2L454.9 113.6M454.9 113.6L466.8 94.1M466.8 94.1L477.2 77.1M477.2 77.1L486.3 62.1M486.3 62.1L494.4 48.9M494.4 48.9L501.6 37.0M361.5 281.7L389.4 234.4M389.4 234.4L412.0 196.0M412.0 196.0L430.7 164.3M430.7 164.3L446.5 137.6M446.5 137.6L459.9 114.8M459.9 114.8L471.5 95.2M471.5 95.2L481.6 78.0M481.6 78.0L490.5 62.9M490.5 62.9L498.4 49.6M498.4 49.6L505.4 37.7M368.9 284.7L396.1 236.9M396.1 236.9L418.3 198.1M418.3 198.1L436.5 166.0M436.5 166.0L451.9 139.0M451.9 139.0L465.0 116.0M465.0 116.0L476.3 96.2M476.3 96.2L486.1 78.9M486.1 78.9L494.8 63.8M494.8 63.8L502.4 50.3M502.4 50.3L509.3 38.3M383.9 291.0L409.9 241.9M409.9 241.9L431.0 202.2M431.0 202.2L448.3 169.4M448.3 169.4L462.9 141.9M462.9 141.9L475.3 118.5M475.3 118.5L485.9 98.4M485.9 98.4L495.2 80.8M495.2 80.8L503.4 65.4M503.4 65.4L510.6 51.8M510.6 51.8L517.0 39.6M391.6 294.2L416.9 244.4M416.9 244.4L437.4 204.3M437.4 204.3L454.3 171.1M454.3 171.1L468.4 143.4M468.4 143.4L480.5 119.8M480.5 119.8L490.8 99.5M490.8 99.5L499.8 81.8M499.8 81.8L507.7 66.3M507.7 66.3L514.7 52.5M514.7 52.5L521.0 40.3M399.4 297.5L424.0 247.0M424.0 247.0L443.9 206.4M443.9 206.4L460.3 172.9M460.3 172.9L474.1 144.9M474.1 144.9L485.7 121.1M485.7 121.1L495.7 100.6M495.7 100.6L504.5 82.8M504.5 82.8L512.1 67.1M512.1 67.1L518.9 53.3M518.9 53.3L524.9 41.0M431.2 249.7L450.6 208.5M450.6 208.5L466.4 174.7M466.4 174.7L479.7 146.4M479.7 146.4L491.0 122.3M491.0 122.3L500.7 101.7M500.7 101.7L509.1 83.7M509.1 83.7L516.5 68.0M516.5 68.0L523.1 54.1M523.1 54.1L528.9 41.7M445.9 255.0L464.0 212.9M464.0 212.9L478.8 178.3M478.8 178.3L491.2 149.4M491.2 149.4L501.7 124.9M501.7 124.9L510.7 103.9M510.7 103.9L518.6 85.7M518.6 85.7L525.4 69.7M525.4 69.7L531.5 55.6M531.5 55.6L536.9 43.0M453.4 257.7L470.8 215.1M470.8 215.1L485.1 180.1M485.1 180.1L497.1 151.0M497.1 151.0L507.2 126.3M507.2 126.3L515.8 105.1M515.8 105.1L523.4 86.7M523.4 86.7L529.9 70.6M529.9 70.6L535.7 56.4M535.7 56.4L540.9 43.7M460.9 260.5L477.7 217.3M477.7 217.3L491.5 182.0M491.5 182.0L502.9 152.5M502.9 152.5L512.6 127.6M512.6 127.6L521.0 106.2M521.0 106.2L528.2 87.7M528.2 87.7L534.5 71.4M534.5 71.4L540.0 57.1M540.0 57.1L545.0 44.4M468.6 263.3L484.7 219.6M484.7 219.6L497.9 183.8M497.9 183.8L508.9 154.1M508.9 154.1L518.2 128.9M518.2 128.9L526.1 107.4M526.1 107.4L533.0 88.7M533.0 88.7L539.0 72.3M539.0 72.3L544.4 57.9M544.4 57.9L549.1 45.1M484.2 269.0L499.0 224.2M499.0 224.2L511.0 187.7M511.0 187.7L520.9 157.3M520.9 157.3L529.4 131.6M529.4 131.6L536.6 109.7M536.6 109.7L542.8 90.7M542.8 90.7L548.3 74.1M548.3 74.1L553.1 59.5M553.1 59.5L557.4 46.5M492.2 271.9L506.2 226.5M506.2 226.5L517.6 189.6M517.6 189.6L527.1 158.9M527.1 158.9L535.1 133.0M535.1 133.0L541.9 110.9M541.9 110.9L547.8 91.7M547.8 91.7L553.0 75.0M553.0 75.0L557.5 60.3M557.5 60.3L561.5 47.2M500.3 274.9L513.5 228.9M513.5 228.9L524.3 191.5M524.3 191.5L533.3 160.5M533.3 160.5L540.8 134.4M540.8 134.4L547.2 112.1M547.2 112.1L552.8 92.8M552.8 92.8L557.7 75.9M557.7 75.9L561.9 61.1M561.9 61.1L565.7 48.0M508.5 277.8L520.9 231.3M520.9 231.3L531.1 193.5M531.1 193.5L539.5 162.2M539.5 162.2L546.6 135.8M546.6 135.8L552.6 113.3M552.6 113.3L557.8 93.8M557.8 93.8L562.4 76.9M562.4 76.9L566.4 61.9M566.4 61.9L570.0 48.7M525.2 283.9L536.0 236.2M536.0 236.2L544.9 197.5M544.9 197.5L552.2 165.5M552.2 165.5L558.3 138.6M558.3 138.6L563.5 115.7M563.5 115.7L568.1 95.9M568.1 95.9L572.0 78.7M572.0 78.7L575.4 63.6M575.4 63.6L578.5 50.1M533.7 287.1L543.7 238.7M543.7 238.7L551.9 199.6M551.9 199.6L558.6 167.2M558.6 167.2L564.3 140.1M564.3 140.1L569.1 117.0M569.1 117.0L573.2 97.0M573.2 97.0L576.8 79.6M576.8 79.6L580.0 64.4M542.3 290.2L551.5 241.2M551.5 241.2L559.0 201.6M559.0 201.6L565.1 169.0M565.1 169.0L570.3 141.5M570.3 141.5L574.6 118.2M574.6 118.2L578.4 98.1M578.4 98.1L581.7 80.6M551.1 293.4L559.4 243.8M559.4 243.8L566.1 203.7M566.1 203.7L571.7 170.7M571.7 170.7L576.3 143.0M576.3 143.0L580.3 119.5M575.5 249.0L580.7 208.0" stroke="#8d939b" stroke-width="1" fill="none" opacity="0.61"/><path d="M-342.6 207.5L217.8 -11.4M-342.6 207.5L1087.5 1630.4M-331.6 218.6L229.2 -9.5M-297.6 189.9L1001.5 1292.2M-319.8 230.2L240.8 -7.5M-256.5 173.9L942.7 1060.8M-307.4 242.6L252.8 -5.4M-218.9 159.2L899.9 892.6M-294.1 255.8L265.0 -3.4M-184.3 145.7L867.4 764.8M-280.0 269.8L277.6 -1.2M-152.5 133.2L841.9 664.3M-265.0 284.8L290.5 1.0M-123.0 121.7L821.3 583.4M-248.8 300.9L303.7 3.2M-95.7 111.1L804.3 516.7M-231.5 318.1L317.2 5.6M-70.4 101.2L790.1 460.8M-212.9 336.6L331.2 7.9M-46.7 91.9L778.1 413.3M-192.8 356.6L345.5 10.4M-24.6 83.3L767.7 372.5M-171.1 378.2L360.2 12.9M-3.8 75.2L758.6 336.9M-147.5 401.6L375.3 15.5M15.6 67.6L750.7 305.8M-121.9 427.2L390.8 18.1M33.9 60.4L743.7 278.2M-93.8 455.1L289.0 123.0M51.1 53.7L289.0 123.0M-63.0 485.7L423.2 23.6M67.4 47.4L731.9 231.6M-29.1 519.5L440.1 26.5M82.7 41.4L726.8 211.7M8.6 557.0L457.6 29.5M97.3 35.7L722.2 193.7M50.5 598.7L475.5 32.6M111.1 30.3L718.1 177.4M97.5 645.5L494.1 35.7M124.2 25.2L714.3 162.4M150.7 698.3L513.2 39.0M136.6 20.3L710.8 148.6M211.1 758.5L532.9 42.3M148.5 15.7L707.5 136.0M280.5 827.6L553.2 45.8M159.8 11.3L704.6 124.3M361.1 907.7L574.2 49.4M170.6 7.0L701.8 113.4M455.7 1001.9L595.9 53.1M180.9 3.0L699.2 103.3M568.4 1114.0L618.4 56.9M190.7 -0.8L696.9 93.9M704.9 1249.8L641.6 60.9M200.1 -4.5L694.6 85.2M873.6 1417.6L665.7 65.0M209.2 -8.0L692.5 77.0M1087.5 1630.4L690.6 69.3M217.8 -11.4L690.6 69.3" stroke="#7b8088" stroke-width="1.1" fill="none"/><path d="M289.0 123.0L737.5 253.6" stroke="#a0403e" stroke-width="2"/><path d="M289.0 123.0L406.8 20.8" stroke="#45a044" stroke-width="2"/></svg></div>
<div style="left:61px;top:429px;width:1159px;height:1px;background:#c2cbe0"></div>
<div class="vp" style="left:61px;top:430px;width:577px;height:246px"><svg width="577" height="246" viewBox="0 0 577 246" style="left:0;top:0"><path d="M1.50 0V246M17.50 0V246M25.50 0V246M33.50 0V246M41.50 0V246M57.50 0V246M65.50 0V246M73.50 0V246M81.50 0V246M97.50 0V246M105.50 0V246M113.50 0V246M121.50 0V246M136.50 0V246M144.50 0V246M152.50 0V246M160.50 0V246M176.50 0V246M184.50 0V246M192.50 0V246M200.50 0V246M216.50 0V246M224.50 0V246M232.50 0V246M240.50 0V246M256.50 0V246M264.50 0V246M272.50 0V246M280.50 0V246M296.50 0V246M304.50 0V246M312.50 0V246M320.50 0V246M336.50 0V246M344.50 0V246M352.50 0V246M360.50 0V246M376.50 0V246M384.50 0V246M392.50 0V246M400.50 0V246M416.50 0V246M424.50 0V246M432.50 0V246M440.50 0V246M455.50 0V246M463.50 0V246M471.50 0V246M479.50 0V246M495.50 0V246M503.50 0V246M511.50 0V246M519.50 0V246M535.50 0V246M543.50 0V246M551.50 0V246M559.50 0V246M575.50 0V246M0 11.50H577M0 19.50H577M0 27.50H577M0 35.50H577M0 51.50H577M0 59.50H577M0 67.50H577M0 75.50H577M0 90.50H577M0 98.50H577M0 106.50H577M0 114.50H577M0 130.50H577M0 138.50H577M0 146.50H577M0 154.50H577M0 170.50H577M0 178.50H577M0 186.50H577M0 194.50H577M0 210.50H577M0 218.50H577M0 226.50H577M0 234.50H577" stroke="#90969e" stroke-width="1" fill="none"/><path d="M9.50 0V246M49.50 0V246M89.50 0V246M128.50 0V246M168.50 0V246M208.50 0V246M248.50 0V246M288.50 122.90V246M328.50 0V246M368.50 0V246M408.50 0V246M448.50 0V246M487.50 0V246M527.50 0V246M567.50 0V246M0 3.50H577M0 43.50H577M0 83.50H577M0 122.50H288.50M0 162.50H577M0 202.50H577M0 242.50H577" stroke="#7e838a" stroke-width="1" fill="none"/><path d="M288.10 123.00H577" stroke="#9d3f3e" stroke-width="1.9"/><path d="M288.10 123.90V0" stroke="#41a043" stroke-width="1.9"/></svg>
<div class="vplabel" style="width:63px"><span class="t">Front</span><i style="left:52px"></i><b style="left:54px"></b></div>
<svg style="left:0;top:0" width="577" height="246"><path d="M36.3 180V210.4H65.8" stroke="#55575b" stroke-width="1" fill="none"/></svg>
<span class="t axl" style="left:39px;top:169.3px">z</span><span class="t axl" style="left:68.7px;top:199.3px">x</span>
</div>
<div class="vp" style="left:642px;top:430px;width:578px;height:246px"><svg width="578" height="246" viewBox="0 0 578 246" style="left:0;top:0"><path d="M1.50 0V246M17.50 0V246M25.50 0V246M33.50 0V246M41.50 0V246M57.50 0V246M65.50 0V246M73.50 0V246M81.50 0V246M96.50 0V246M104.50 0V246M112.50 0V246M120.50 0V246M136.50 0V246M144.50 0V246M152.50 0V246M160.50 0V246M176.50 0V246M184.50 0V246M192.50 0V246M200.50 0V246M216.50 0V246M224.50 0V246M232.50 0V246M240.50 0V246M256.50 0V246M264.50 0V246M272.50 0V246M280.50 0V246M296.50 0V246M304.50 0V246M312.50 0V246M320.50 0V246M336.50 0V246M344.50 0V246M352.50 0V246M360.50 0V246M376.50 0V246M384.50 0V246M392.50 0V246M400.50 0V246M416.50 0V246M423.50 0V246M431.50 0V246M439.50 0V246M455.50 0V246M463.50 0V246M471.50 0V246M479.50 0V246M495.50 0V246M503.50 0V246M511.50 0V246M519.50 0V246M535.50 0V246M543.50 0V246M551.50 0V246M559.50 0V246M575.50 0V246M0 11.50H578M0 19.50H578M0 27.50H578M0 35.50H578M0 51.50H578M0 59.50H578M0 67.50H578M0 75.50H578M0 90.50H578M0 98.50H578M0 106.50H578M0 114.50H578M0 130.50H578M0 138.50H578M0 146.50H578M0 154.50H578M0 170.50H578M0 178.50H578M0 186.50H578M0 194.50H578M0 210.50H578M0 218.50H578M0 226.50H578M0 234.50H578" stroke="#90969e" stroke-width="1" fill="none"/><path d="M9.50 0V246M49.50 0V246M88.50 0V246M128.50 0V246M168.50 0V246M208.50 0V246M248.50 0V246M288.50 122.90V246M328.50 0V246M368.50 0V246M408.50 0V246M447.50 0V246M487.50 0V246M527.50 0V246M567.50 0V246M0 3.50H578M0 43.50H578M0 83.50H578M0 122.50H288.40M0 162.50H578M0 202.50H578M0 242.50H578" stroke="#7e838a" stroke-width="1" fill="none"/><path d="M288.00 123.00H578" stroke="#9d3f3e" stroke-width="1.9"/><path d="M288.00 123.90V0" stroke="#41a043" stroke-width="1.9"/></svg>
<svg style="left:0;top:0" width="578" height="246"><path d="M36.5 180V210.4H66" stroke="#55575b" stroke-width="1" fill="none"/></svg>
<span class="t axl" style="left:39.2px;top:169.3px">z</span><span class="t axl" style="left:69.1px;top:197.4px">y</span>
</div>
<span class="t" style="left:1231px;top:186.5px;font-size:12.5px;color:#333">说明</span>
<div style="left:1262px;top:190px;width:18px;height:1px;background:#cfd5e3"></div><div style="left:1262px;top:193px;width:18px;height:1px;background:#cfd5e3"></div>
<div style="left:1233px;top:210.7px;width:14.5px;height:14.5px;border-radius:50%;border:1px solid #1c1c1c;background:conic-gradient(from 20deg,#ff2a00,#ffd800,#6bea00,#00d878,#00c8f0,#1a34ff,#b000e8,#ff00a0,#ff2a00)"></div><div style="left:1236px;top:213.7px;width:8.5px;height:8.5px;border-radius:50%;border:0.8px solid #1c1c1c;background:#fff"></div>
<svg style="left:1258px;top:208px" width="20" height="20" viewBox="1258 208 20 20"><defs><linearGradient id="rg1" x1="0" y1="0" x2="1" y2="1"><stop offset="0" stop-color="#ff5a14"/><stop offset="1" stop-color="#d8300c"/></linearGradient></defs><path d="M1260 210.4L1274.7 213.4L1274.2 221.4L1266.6 225.2L1261.5 219.8Z" fill="#fff" stroke="#3a2a2a" stroke-width="0.8" stroke-linejoin="round"/><path d="M1260 210.4L1274.7 213.4L1274.5 217.2L1266.8 220.8L1261 216.2Z" fill="url(#rg1)"/><path d="M1261.4 219.4L1266.7 223L1274.3 219.4L1274.2 221.4L1266.6 225.2L1261.6 220.2Z" fill="#2c4ab4"/></svg>
<div style="left:1227px;top:230px;width:60px;height:75px;border:1px solid #c3cbdd;background:#ebecf1"></div>
<div style="left:1229px;top:238px;width:60px;height:24px;border:1px solid #c3cbdd;background:#fff"></div>
<div style="left:1234px;top:281px;width:13px;height:13px;border:1px solid #333;background:#fff"></div><svg style="left:1234px;top:281px" width="13" height="13"><path d="M2.6 6.4L5.4 9.6L10.8 2.6" stroke="#222" stroke-width="1.3" fill="none"/></svg>
<span class="t" style="left:1249px;top:281px;font-size:13px;color:#222">自动更新</span>
<div style="left:1236px;top:299px;width:44px;height:1px;background:#d9dde8"></div>
<div style="left:1227px;top:303px;width:60px;height:396px;background:#fff;border-left:1px solid #c3cbdd;border-bottom:1px solid #c3cbdd"></div>
<div id="help" style="left:1238px;top:314px;width:200px;height:367px;overflow:hidden">
<span class="t" style="left:0;top:1.2px;font-size:22.8px;font-weight:bold;line-height:23.5px;white-space:pre;letter-spacing:0.7px">Open
or Insert
file</span>
<div style="left:0;top:75px;width:60px;height:1px;background:#b9b9b9"></div>
<span class="t hp" style="left:0;top:82.5px">The <i>Open</i> command
opens a
or other
format
window.</span>
<span class="t hp" style="left:0;top:160.5px">The <i>Insert</i> command
inserts
stored
external
group,
objects
command
specific
and applies
rotation
when in</span>
<span class="t hp" style="left:0;top:326.5px">The <i>Import</i>
merges
external</span>
</div>
<div style="left:1228px;top:681px;width:60px;height:17px;background:#f0f0f0"></div>
<div style="left:1262px;top:682.5px;width:20px;height:14.5px;background:#cdcdcd"></div>
<svg style="left:1243px;top:682.5px" width="14" height="14" viewBox="0 0 14 14"><path d="M10.6 1.6L3.6 7L10.6 12.4" stroke="#5a5a5a" stroke-width="2.4" fill="none"/></svg>
<svg style="left:58px;top:676px" width="92" height="26" viewBox="0 0 92 26"><path d="M2.5 2V13L11.2 24.2H85Q88.5 24.2 88.5 20.8V2" fill="#f1f2f6" stroke="#c3cbdd" stroke-width="1"/></svg>
<span class="t vt" style="left:72px">Perspective</span><span class="t vt" style="left:159.5px">Top</span><span class="t vt" style="left:199.5px">Front</span><span class="t vt" style="left:248.5px">Right</span>
<svg style="left:299px;top:684px" width="11" height="11" viewBox="0 0 11 11"><path d="M4.3 1H6.7V4.3H10V6.7H6.7V10H4.3V6.7H1V4.3H4.3Z" fill="#fafafa" stroke="#777" stroke-width="0.9"/></svg>
<div style="left:1px;top:708px;width:1px;height:12px;background:#c9d0e0"></div>
<div style="left:4.7px;top:713.5px;width:13.5px;height:13px;border:1px solid #222;background:#fff"></div><span class="t" style="left:20.5px;top:713.3px;font-size:13px;color:#111">端点</span>
<div style="left:53.3px;top:713.5px;width:13.5px;height:13px;border:1px solid #222;background:#fff"></div><span class="t" style="left:69.1px;top:713.3px;font-size:13px;color:#111">最近点</span>
<div style="left:115.9px;top:713.5px;width:13.5px;height:13px;border:1px solid #222;background:#fff"></div><span class="t" style="left:131.7px;top:713.3px;font-size:13px;color:#111">点</span>
<div style="left:152.0px;top:713.5px;width:13.5px;height:13px;border:1px solid #222;background:#fff"></div><span class="t" style="left:167.8px;top:713.3px;font-size:13px;color:#111">中点</span>
<div style="left:201.2px;top:713.5px;width:13.5px;height:13px;border:1px solid #222;background:#fff"></div><span class="t" style="left:217.0px;top:713.3px;font-size:13px;color:#111">中心点</span>
<div style="left:264.0px;top:713.5px;width:13.5px;height:13px;border:1px solid #222;background:#fff"></div><span class="t" style="left:279.8px;top:713.3px;font-size:13px;color:#111">交点</span>
<div style="left:312.5px;top:713.5px;width:13.5px;height:13px;border:1px solid #222;background:#fff"></div><span class="t" style="left:328.3px;top:713.3px;font-size:13px;color:#111">垂点</span>
<div style="left:361.0px;top:713.5px;width:13.5px;height:13px;border:1px solid #222;background:#fff"></div><span class="t" style="left:376.8px;top:713.3px;font-size:13px;color:#111">切点</span>
<div style="left:410.0px;top:713.5px;width:13.5px;height:13px;border:1px solid #222;background:#fff"></div><span class="t" style="left:425.8px;top:713.3px;font-size:13px;color:#111">四分点</span>
<div style="left:472.5px;top:713.5px;width:13.5px;height:13px;border:1px solid #222;background:#fff"></div><span class="t" style="left:488.3px;top:713.3px;font-size:13px;color:#111">节点</span>
<div style="left:521.3px;top:713.5px;width:13.5px;height:13px;border:1px solid #222;background:#fff"></div><span class="t" style="left:537.1px;top:713.3px;font-size:13px;color:#111">顶点</span>
<div style="left:571.3px;top:713.5px;width:13px;height:13px;border:1px solid #c4c4c4;background:#e4e4e4"></div><span class="t" style="left:587.1px;top:713.3px;font-size:13px;color:#111">投影</span>
<div style="left:632.8px;top:713.5px;width:13px;height:13px;border:1px solid #c4c4c4;background:#e4e4e4"></div><span class="t" style="left:648.6px;top:713.3px;font-size:13px;color:#111">停用</span>
<div id="dlg">
<div id="dlgtitle">
<svg style="left:8px;top:6px" width="16" height="16" viewBox="0 0 16 16"><rect width="16" height="16" fill="#000"/><path d="M0 0H2.7C2.5 2.6 1.6 4.9 0 6.9Z" fill="#fff"/><path d="M0.3 8.3L1.7 6.3C2.8 4.6 3.4 2.8 3.7 1L4.3 0.7C5.6 2.4 6.6 4.4 7.7 6.3C8.9 8.3 10.3 9.4 12 8.9L16 8.1V8.8L9.6 15.7L9 15.4Z" fill="#fff"/><path d="M3.7 8.6C4.8 9.3 6 10.4 7 11.6M4.9 7.5C5.6 7.9 6.2 8.5 6.8 9.2" stroke="#000" stroke-width="0.95" fill="none"/><path d="M10.9 9.9C11.6 9.8 12.1 9.4 12.4 8.9" stroke="#000" stroke-width="0.8" fill="none"/><path d="M14.6 1.5L12.7 6.8" stroke="#fff" stroke-width="1" stroke-dasharray="1.3 0.5"/><path d="M11.6 1.3H14.8" stroke="#fff" stroke-width="0.6" stroke-dasharray="0.8 0.5"/></svg>
<span class="t" style="left:29px;top:9px;font-size:12px">插入</span>
<svg style="left:362px;top:7px" width="14" height="14" viewBox="0 0 14 14"><path d="M2 2L12 12M12 2L2 12" stroke="#000" stroke-width="1.15"/></svg>
</div>
<span class="t lbl" style="left:18px;top:59px">名称:</span>
<div style="left:53px;top:53px;width:286px;height:25px;border:1px solid #adadad;background:linear-gradient(#f0f0f0,#e5e5e5)"></div>
<svg style="left:324.7px;top:62px" width="10" height="7" viewBox="0 0 10 7"><path d="M2.2 1.4L5 4.3L7.8 1.4" stroke="#5a5a5a" stroke-width="1.15" fill="none"/></svg>
<svg style="left:347px;top:60px" width="17" height="13" viewBox="0 0 17 13"><defs><linearGradient id="dfg" x1="0" y1="0" x2="0" y2="1"><stop offset="0" stop-color="#fde27a"/><stop offset="1" stop-color="#f0b400"/></linearGradient></defs><path d="M1.2 10.8V2L2.2 1.2H5.2L6.6 2.6H12.2V4.6" fill="#f4cc3a" stroke="#5a4500" stroke-width="0.9" stroke-linejoin="round"/><path d="M1.2 10.8L3.6 4.6H14.6L12 10.8Z" fill="url(#dfg)" stroke="#5a4500" stroke-width="0.9" stroke-linejoin="round"/></svg>
<span class="t lbl" style="left:18px;top:102px">描述:</span>
<div style="left:18px;top:123px;width:348px;height:45px;border:1px solid #adadad;background:#fff"></div>
<span class="t lbl" style="left:18px;top:176px">插入为</span>
<div style="left:27px;top:200px;width:12px;height:12px;border:1px solid #333;border-radius:50%;background:#fff"></div><div style="left:30px;top:203px;width:6px;height:6px;border-radius:50%;background:#333"></div>
<div style="left:27px;top:218px;width:12px;height:12px;border:1px solid #333;border-radius:50%;background:#fff"></div>
<div style="left:27px;top:236px;width:12px;height:12px;border:1px solid #333;border-radius:50%;background:#fff"></div>
<span class="t lbl" style="left:45px;top:199px">图块引例</span><span class="t lbl" style="left:45px;top:217px">群组</span><span class="t lbl" style="left:45px;top:235px">个别物件</span>
<div style="left:235px;top:173px;width:131px;height:81px;border:1px solid #828282;background:#f0f0f0"></div>
<span class="t lbl" style="left:18px;top:262px">插入点</span><div class="grpline" style="left:60px;top:268px;width:71px"></div>
<span class="t lbl" style="left:136px;top:262px">缩放比</span><div class="grpline" style="left:178px;top:268px;width:69px"></div>
<span class="t lbl" style="left:252px;top:262px">旋转</span><div class="grpline" style="left:281px;top:268px;width:85px"></div>
<div class="cb" style="left:19px;top:285px"></div><svg style="left:19px;top:285px" width="14" height="13"><path d="M2.6 6.4L5.8 9.8L11.6 2.4" stroke="#111" stroke-width="1.7" fill="none"/></svg><span class="t lbl" style="left:38px;top:285px">提示</span>
<div class="cb" style="left:137px;top:285px;border-color:#0078d7;background:#eef4fc"></div><span class="t lbl" style="left:156px;top:285px">提示</span>
<div class="cb" style="left:253px;top:285px"></div><span class="t lbl" style="left:272px;top:285px">提示</span>
<div class="cb" style="left:137px;top:308px"></div><svg style="left:137px;top:308px" width="14" height="13"><path d="M2.6 6.4L5.8 9.8L11.6 2.4" stroke="#111" stroke-width="1.7" fill="none"/></svg><span class="t lbl" style="left:156px;top:308px">均匀</span>
<!-- numeric rows --><span class="t xl" style="left:18px;top:334px">X:</span><div class="num" style="left:30px;top:329px;width:89px">0.000</div><div style="left:118px;top:329px;width:13px;height:23px;border:1px solid #adadad;background:#f3f3f3"></div><svg style="left:118px;top:329px" width="13" height="23"><path d="M1 11.5H12" stroke="#c4c4c4" stroke-width="1"/><path d="M3.0 8.6L6.8 4.9L10.6 8.6Z" fill="#b4b4b4"/><path d="M3.0 14.6L6.8 18.3L10.6 14.6Z" fill="#b4b4b4"/></svg><span class="t xl" style="left:136px;top:334px">X:</span><div class="num" style="left:148px;top:329px;width:87px">1.000</div><div style="left:234px;top:329px;width:13px;height:23px;border:1px solid #adadad;background:#f3f3f3"></div><svg style="left:234px;top:329px" width="13" height="23"><path d="M1 11.5H12" stroke="#c4c4c4" stroke-width="1"/><path d="M3.0 8.6L6.8 4.9L10.6 8.6Z" fill="#484848"/><path d="M3.0 14.6L6.8 18.3L10.6 14.6Z" fill="#484848"/></svg><span class="t xl" style="left:18px;top:362px">Y:</span><div class="num" style="left:30px;top:357px;width:89px">0.000</div><div style="left:118px;top:357px;width:13px;height:23px;border:1px solid #adadad;background:#f3f3f3"></div><svg style="left:118px;top:357px" width="13" height="23"><path d="M1 11.5H12" stroke="#c4c4c4" stroke-width="1"/><path d="M3.0 8.6L6.8 4.9L10.6 8.6Z" fill="#b4b4b4"/><path d="M3.0 14.6L6.8 18.3L10.6 14.6Z" fill="#b4b4b4"/></svg><span class="t xl" style="left:136px;top:362px">Y:</span><div class="num" style="left:148px;top:357px;width:87px;color:#8d8d8d">1.000</div><div style="left:234px;top:357px;width:13px;height:23px;border:1px solid #adadad;background:#f3f3f3"></div><svg style="left:234px;top:357px" width="13" height="23"><path d="M1 11.5H12" stroke="#c4c4c4" stroke-width="1"/><path d="M3.0 8.6L6.8 4.9L10.6 8.6Z" fill="#b4b4b4"/><path d="M3.0 14.6L6.8 18.3L10.6 14.6Z" fill="#b4b4b4"/></svg><span class="t xl" style="left:18px;top:390px">Z:</span><div class="num" style="left:30px;top:385px;width:89px">0.000</div><div style="left:118px;top:385px;width:13px;height:23px;border:1px solid #adadad;background:#f3f3f3"></div><svg style="left:118px;top:385px" width="13" height="23"><path d="M1 11.5H12" stroke="#c4c4c4" stroke-width="1"/><path d="M3.0 8.6L6.8 4.9L10.6 8.6Z" fill="#b4b4b4"/><path d="M3.0 14.6L6.8 18.3L10.6 14.6Z" fill="#b4b4b4"/></svg><span class="t xl" style="left:136px;top:390px">Z:</span><div class="num" style="left:148px;top:385px;width:87px;color:#8d8d8d">1.000</div><div style="left:234px;top:385px;width:13px;height:23px;border:1px solid #adadad;background:#f3f3f3"></div><svg style="left:234px;top:385px" width="13" height="23"><path d="M1 11.5H12" stroke="#c4c4c4" stroke-width="1"/><path d="M3.0 8.6L6.8 4.9L10.6 8.6Z" fill="#b4b4b4"/><path d="M3.0 14.6L6.8 18.3L10.6 14.6Z" fill="#b4b4b4"/></svg><span class="t lbl" style="left:252px;top:334px">角度:</span><div class="num" style="left:282px;top:329px;width:72px">0.000</div><div style="left:353px;top:329px;width:13px;height:23px;border:1px solid #adadad;background:#f3f3f3"></div><svg style="left:353px;top:329px" width="13" height="23"><path d="M1 11.5H12" stroke="#c4c4c4" stroke-width="1"/><path d="M3.0 8.6L6.8 4.9L10.6 8.6Z" fill="#484848"/><path d="M3.0 14.6L6.8 18.3L10.6 14.6Z" fill="#484848"/></svg>
<div class="btn" style="left:124px;top:431px;width:80px;border:2px solid #0078d7;line-height:21px">确定(K)</div>
<div class="btn" style="left:209px;top:431px;width:80px">取消(A)</div>
<div class="btn" style="left:294px;top:431px;width:80px">说明</div>
</div>
</body></html>
